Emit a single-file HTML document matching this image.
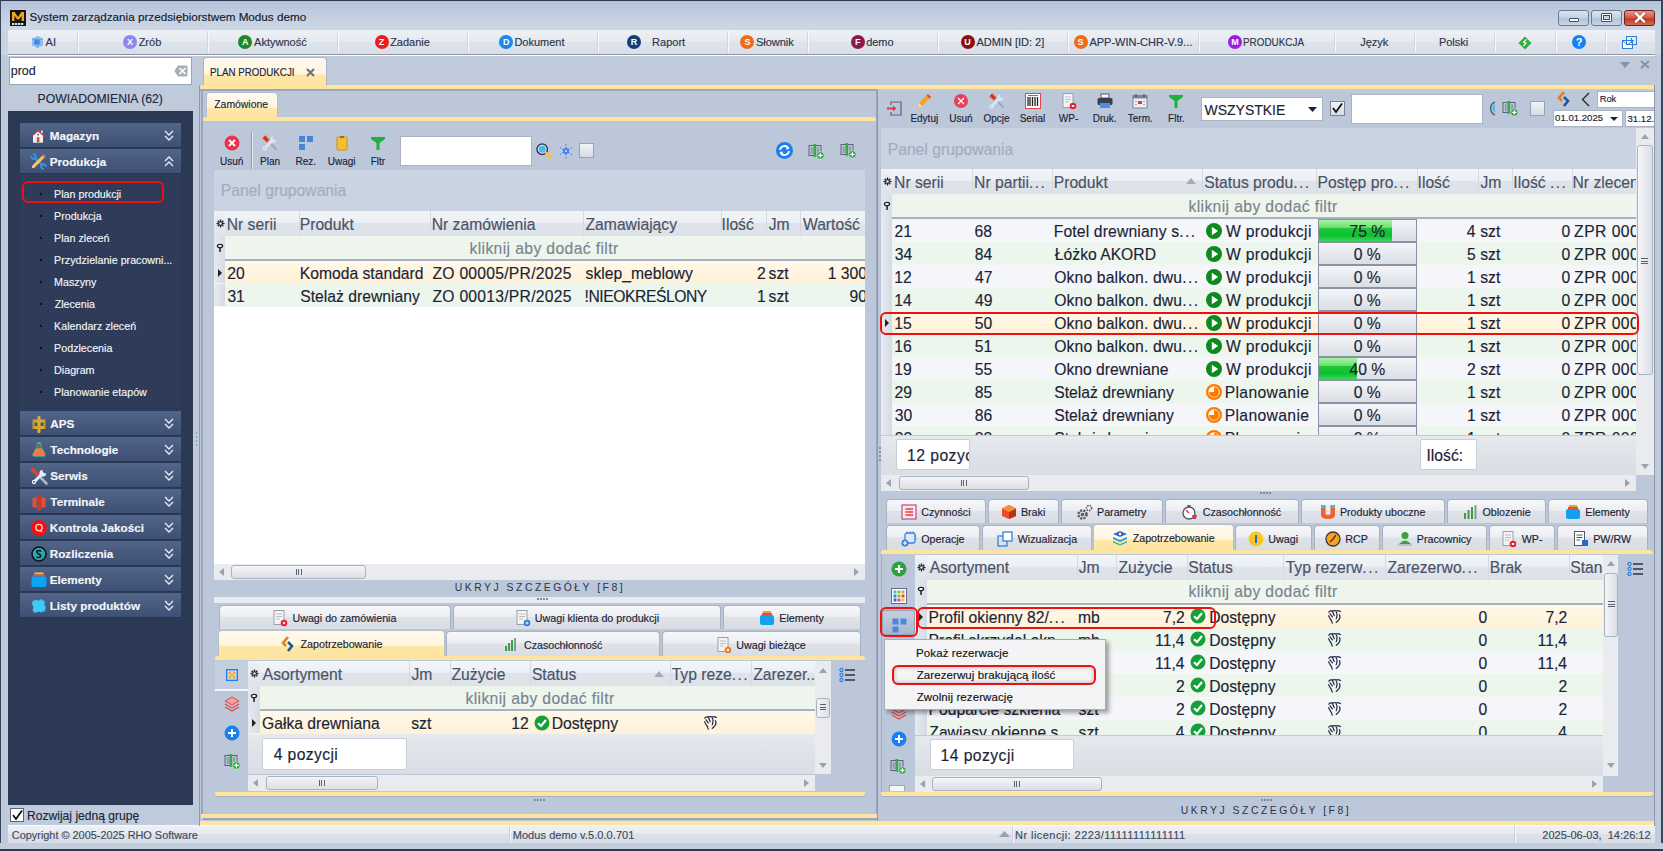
<!DOCTYPE html>
<html><head><meta charset="utf-8">
<style>
*{margin:0;padding:0;box-sizing:border-box}
html,body{width:1663px;height:851px;overflow:hidden}
body{position:relative;background:#bccada;font-family:"Liberation Sans",sans-serif;color:#1b2436}
.a{position:absolute}
.t{position:absolute;white-space:nowrap;line-height:1;-webkit-text-stroke:0.15px currentColor}
svg{overflow:visible}
</style></head><body>
<div class="a" style="left:0px;top:0px;width:1663px;height:851px;background:#bfcbdb"></div>
<div class="a" style="left:0px;top:0px;width:1663px;height:30px;background:linear-gradient(#b4c2d8,#c5d1e2 60%,#ccd7e6)"></div>
<div class="a" style="left:0px;top:30px;width:1663px;height:25px;background:#c9d4e3"></div>
<div class="a" style="left:0px;top:0px;width:1663px;height:1px;background:#2d3a52"></div>
<div class="a" style="left:0px;top:0px;width:1px;height:851px;background:#3a465c"></div>
<div class="a" style="left:1661px;top:0px;width:2px;height:851px;background:#3a465c"></div>
<div class="a" style="left:0px;top:843px;width:1663px;height:6px;background:#c3cddb"></div>
<div class="a" style="left:0px;top:849px;width:1663px;height:2px;background:#2d3a52"></div>
<div class="a" style="left:10px;top:10px;width:16px;height:16px;background:#151515"></div>
<svg class="a" style="left:11px;top:11px;" width="14" height="10" viewBox="0 0 14 10"><path d="M1 10 V1 H3.6 L7 6 L10.4 1 H13 V10 H10.6 V4.8 L7.8 8.6 H6.2 L3.4 4.8 V10Z" fill="#f5a41e"/></svg>
<div class="a" style="left:12px;top:22.5px;width:12px;height:2px;background:repeating-linear-gradient(90deg,#ddd 0 2px,#555 2px 3px)"></div>
<div class="t" style="left:29.47px;top:11.23px;font-size:11.7px;color:#141a28;">System zarządzania przedsiębiorstwem Modus demo</div>
<div class="a" style="left:1558px;top:10px;width:31px;height:16px;background:linear-gradient(#dde6f1,#c3d1e3 50%,#b2c3da 55%,#c9d6e6);border:1px solid #6a7a92;border-radius:3px"></div>
<div class="a" style="left:1591px;top:10px;width:31px;height:16px;background:linear-gradient(#dde6f1,#c3d1e3 50%,#b2c3da 55%,#c9d6e6);border:1px solid #6a7a92;border-radius:3px"></div>
<div class="a" style="left:1624px;top:10px;width:31px;height:16px;background:linear-gradient(#e49a8a,#d0583f 50%,#c03a22 55%,#d36a52);border:1px solid #6b1f1a;border-radius:3px"></div>
<div class="a" style="left:1569px;top:18px;width:10px;height:4px;background:#fff;border:1px solid #3d4d66;border-radius:1px"></div>
<div class="a" style="left:1601px;top:13px;width:11px;height:9px;border:1px solid #3d4d66;background:#fff;border-radius:1px"></div>
<div class="a" style="left:1603px;top:15px;width:7px;height:5px;border:1px solid #3d4d66;background:#c8d5e6"></div>
<svg class="a" style="left:1634px;top:12px;" width="12" height="11" viewBox="0 0 12 11"><path d="M2 1.5 L10 9.5 M10 1.5 L2 9.5" stroke="#3a1010" stroke-width="3.6" stroke-linecap="square" opacity="0.35"/><path d="M2 1.5 L10 9.5 M10 1.5 L2 9.5" stroke="#fff" stroke-width="2.4" stroke-linecap="square"/></svg>
<div class="a" style="left:8px;top:30px;width:1647px;height:24px;background:linear-gradient(#eef1f6,#e4e9f0 50%,#dfe4ec 50%,#d9dfe8)"></div>
<div class="a" style="left:8px;top:54px;width:1647px;height:1px;background:#8f949c"></div>
<div class="a" style="left:8px;top:55px;width:1647px;height:1px;background:#fbfcfd"></div>
<div class="a" style="left:77px;top:31px;width:1px;height:22px;background:#d2d8e1"></div>
<div class="a" style="left:78px;top:31px;width:1px;height:22px;background:#f6f8fb"></div>
<div class="a" style="left:207px;top:31px;width:1px;height:22px;background:#d2d8e1"></div>
<div class="a" style="left:208px;top:31px;width:1px;height:22px;background:#f6f8fb"></div>
<div class="a" style="left:337px;top:31px;width:1px;height:22px;background:#d2d8e1"></div>
<div class="a" style="left:338px;top:31px;width:1px;height:22px;background:#f6f8fb"></div>
<div class="a" style="left:467px;top:31px;width:1px;height:22px;background:#d2d8e1"></div>
<div class="a" style="left:468px;top:31px;width:1px;height:22px;background:#f6f8fb"></div>
<div class="a" style="left:597px;top:31px;width:1px;height:22px;background:#d2d8e1"></div>
<div class="a" style="left:598px;top:31px;width:1px;height:22px;background:#f6f8fb"></div>
<div class="a" style="left:727px;top:31px;width:1px;height:22px;background:#d2d8e1"></div>
<div class="a" style="left:728px;top:31px;width:1px;height:22px;background:#f6f8fb"></div>
<div class="a" style="left:807px;top:31px;width:1px;height:22px;background:#d2d8e1"></div>
<div class="a" style="left:808px;top:31px;width:1px;height:22px;background:#f6f8fb"></div>
<div class="a" style="left:937px;top:31px;width:1px;height:22px;background:#d2d8e1"></div>
<div class="a" style="left:938px;top:31px;width:1px;height:22px;background:#f6f8fb"></div>
<div class="a" style="left:1067px;top:31px;width:1px;height:22px;background:#d2d8e1"></div>
<div class="a" style="left:1068px;top:31px;width:1px;height:22px;background:#f6f8fb"></div>
<div class="a" style="left:1198px;top:31px;width:1px;height:22px;background:#d2d8e1"></div>
<div class="a" style="left:1199px;top:31px;width:1px;height:22px;background:#f6f8fb"></div>
<div class="a" style="left:1334px;top:31px;width:1px;height:22px;background:#d2d8e1"></div>
<div class="a" style="left:1335px;top:31px;width:1px;height:22px;background:#f6f8fb"></div>
<div class="a" style="left:1414px;top:31px;width:1px;height:22px;background:#d2d8e1"></div>
<div class="a" style="left:1415px;top:31px;width:1px;height:22px;background:#f6f8fb"></div>
<div class="a" style="left:1494px;top:31px;width:1px;height:22px;background:#d2d8e1"></div>
<div class="a" style="left:1495px;top:31px;width:1px;height:22px;background:#f6f8fb"></div>
<div class="a" style="left:1555px;top:31px;width:1px;height:22px;background:#d2d8e1"></div>
<div class="a" style="left:1556px;top:31px;width:1px;height:22px;background:#f6f8fb"></div>
<div class="a" style="left:1605px;top:31px;width:1px;height:22px;background:#d2d8e1"></div>
<div class="a" style="left:1606px;top:31px;width:1px;height:22px;background:#f6f8fb"></div>
<svg class="a" style="left:29.746874999999996px;top:35px;" width="14" height="14" viewBox="0 0 14 14"><path d="M2 3.5 L7.5 1 L13 3.5 L13 10.5 L7.5 13 L2 10.5Z" fill="#8cbcf2"/><path d="M4.5 4.5 L9.5 4.5 L9.5 9.5 L4.5 9.5Z" fill="#2d7fe0"/><path d="M2 3.5 L7.5 6 L13 3.5 M7.5 6 V13" stroke="#5a9ae8" stroke-width="0.8" fill="none"/></svg>
<div class="t" style="left:45.58px;top:36.85px;font-size:11px;color:#2c3549;">AI</div>
<div class="a" style="left:123.13750000000002px;top:35px;width:14px;height:14px;border-radius:7px;background:#8c86f0;color:#fff;font-size:9px;font-weight:bold;line-height:14px;text-align:center;font-family:Liberation Sans">X</div>
<div class="t" style="left:138.65px;top:36.85px;font-size:11px;color:#2c3549;">Zrób</div>
<div class="a" style="left:238.15312500000002px;top:35px;width:14px;height:14px;border-radius:7px;background:#1a8a2a;color:#fff;font-size:9px;font-weight:bold;line-height:14px;text-align:center;font-family:Liberation Sans">A</div>
<div class="t" style="left:254.08px;top:36.85px;font-size:11px;color:#2c3549;">Aktywność</div>
<div class="a" style="left:374.559375px;top:35px;width:14px;height:14px;border-radius:7px;background:#e81e1e;color:#fff;font-size:9px;font-weight:bold;line-height:14px;text-align:center;font-family:Liberation Sans">Z</div>
<div class="t" style="left:390.15px;top:36.85px;font-size:11px;color:#2c3549;">Zadanie</div>
<div class="a" style="left:499.371875px;top:35px;width:14px;height:14px;border-radius:7px;background:#1e88e8;color:#fff;font-size:9px;font-weight:bold;line-height:14px;text-align:center;font-family:Liberation Sans">D</div>
<div class="t" style="left:514.4px;top:36.85px;font-size:11px;color:#2c3549;">Dokument</div>
<div class="a" style="left:627px;top:35px;width:14px;height:14px;border-radius:7px;background:#123f7a;color:#fff;font-size:9px;font-weight:bold;line-height:14px;text-align:center;font-family:Liberation Sans">R</div>
<div class="t" style="left:652.1px;top:36.85px;font-size:11px;color:#2c3549;">Raport</div>
<div class="a" style="left:740.4968749999999px;top:35px;width:14px;height:14px;border-radius:7px;background:#f06a1a;color:#fff;font-size:9px;font-weight:bold;line-height:14px;text-align:center;font-family:Liberation Sans">S</div>
<div class="t" style="left:755.9px;top:36.85px;font-size:11px;color:#2c3549;">Słownik</div>
<div class="a" style="left:850.6843749999999px;top:35px;width:14px;height:14px;border-radius:7px;background:#8a1a4a;color:#fff;font-size:9px;font-weight:bold;line-height:14px;text-align:center;font-family:Liberation Sans">F</div>
<div class="t" style="left:866.14px;top:36.85px;font-size:11px;color:#2c3549;">demo</div>
<div class="a" style="left:960.5124999999999px;top:35px;width:14px;height:14px;border-radius:7px;background:#8a1010;color:#fff;font-size:9px;font-weight:bold;line-height:14px;text-align:center;font-family:Liberation Sans">U</div>
<div class="t" style="left:976.38px;top:36.85px;font-size:11px;color:#2c3549;">ADMIN [ID: 2]</div>
<div class="a" style="left:1073.5046875px;top:35px;width:14px;height:14px;border-radius:7px;background:#f06a1a;color:#fff;font-size:9px;font-weight:bold;line-height:14px;text-align:center;font-family:Liberation Sans">S</div>
<div class="t" style="left:1089.38px;top:36.85px;font-size:11px;color:#2c3549;">APP-WIN-CHR-V.9...</div>
<div class="a" style="left:1227.9203125px;top:35px;width:14px;height:14px;border-radius:7px;background:#9a20e0;color:#fff;font-size:9px;font-weight:bold;line-height:14px;text-align:center;font-family:Liberation Sans">M</div>
<div class="t" style="left:1242.9px;top:36.85px;font-size:11px;color:#2c3549;transform:scaleX(0.9);transform-origin:left">PRODUKCJA</div>
<div class="t" style="left:1360.23px;top:36.85px;font-size:11px;color:#2c3549;">Język</div>
<div class="t" style="left:1438.9px;top:36.85px;font-size:11px;color:#2c3549;">Polski</div>
<svg class="a" style="left:1518px;top:36px;" width="14" height="14" viewBox="0 0 14 14"><path d="M7 0.5 L13.5 7 L7 13.5 L0.5 7Z" fill="#2fae3c"/><path d="M8.5 3.5 L5.5 6 L8 7 L5.5 10" stroke="#fff" stroke-width="1.2" fill="none"/></svg>
<div class="a" style="left:1572px;top:35px;width:14px;height:14px;border-radius:7px;background:#1a7ff0;color:#fff;font-size:11px;font-weight:bold;line-height:14px;text-align:center">?</div>
<svg class="a" style="left:1622px;top:36px;" width="15" height="13" viewBox="0 0 15 13"><rect x="0.5" y="4.5" width="10" height="8" fill="#fff" stroke="#2f7fd8"/><path d="M0.5 4.5 L5.5 9 L10.5 4.5" stroke="#2f7fd8" fill="none"/><rect x="4.5" y="0.5" width="10" height="8" fill="none" stroke="#2f7fd8"/><path d="M9.5 2 V7 M7 4.5 H12" stroke="#2f7fd8"/></svg>
<div class="a" style="left:9px;top:57px;width:183px;height:28px;background:#fff;border:1px solid #97a5b9"></div>
<div class="t" style="left:10.69px;top:64.67px;font-size:12.5px;color:#1b2436;">prod</div>
<svg class="a" style="left:174px;top:65px;" width="14" height="12" viewBox="0 0 14 12"><path d="M4 0.5 H12.5 Q13.5 0.5 13.5 1.5 V10.5 Q13.5 11.5 12.5 11.5 H4 L0.3 6Z" fill="#a9aeb6"/></svg>
<svg class="a" style="left:178px;top:67px;" width="9" height="8" viewBox="0 0 9 8"><path d="M1.5 1 L7.5 7 M7.5 1 L1.5 7" stroke="#fff" stroke-width="1.6"/></svg>
<div class="t" style="left:-299.8px;width:800px;text-align:center;top:93.01px;font-size:12.2px;color:#1f2840;">POWIADOMIENIA (62)</div>
<div class="a" style="left:8px;top:111px;width:185px;height:694px;background:#2c3954"></div>
<svg class="a" style="left:20px;top:174px;" width="161" height="237" viewBox="0 0 161 237"><defs><pattern id="dots" width="4" height="4" patternUnits="userSpaceOnUse"><rect width="4" height="4" fill="#2c3a57"/><rect x="1" y="1" width="1" height="1" fill="#3a4a6a"/><rect x="3" y="3" width="1" height="1" fill="#3a4a6a"/></pattern></defs><rect width="161" height="237" fill="url(#dots)"/></svg>
<div class="a" style="left:20px;top:123px;width:161px;height:25px;background:linear-gradient(#52658a,#475a7e 50%,#3e5074 100%);border-bottom:1px solid #2a3650"></div>
<div class="t" style="left:49.72px;top:129.74px;font-size:11.7px;color:#f4f6fa;font-weight:bold;">Magazyn</div>
<svg class="a" style="left:164px;top:130px;" width="10" height="11" viewBox="0 0 10 11"><path d="M1 1 L5 5 L9 1 M1 6 L5 10 L9 6" stroke="#e8edf5" stroke-width="1.3" fill="none"/></svg>
<svg class="a" style="left:31px;top:129px;" width="15" height="15" viewBox="0 0 15 15"><rect x="10" y="1.5" width="1.6" height="3" fill="#e8ecf4"/><path d="M7 1.5 L13 7 L12 7 L12 13.5 L2 13.5 L2 7 L1 7Z" fill="#eef1f8"/><path d="M7 0.8 L14 7.2 L12.8 7.6 L7 2.4 L1.2 7.6 L0 7.2Z" fill="#d0302a"/><rect x="5.8" y="8.2" width="2.6" height="5.3" fill="#e04a1a"/><circle cx="7.1" cy="5.6" r="0.9" fill="#1a60b0"/><rect x="2" y="13" width="10" height="0.8" fill="#b8c0d0"/></svg>
<div class="a" style="left:20px;top:149px;width:161px;height:25px;background:linear-gradient(#52658a,#475a7e 50%,#3e5074 100%);border-bottom:1px solid #2a3650"></div>
<div class="t" style="left:49.72px;top:155.74px;font-size:11.7px;color:#f4f6fa;font-weight:bold;">Produkcja</div>
<svg class="a" style="left:164px;top:156px;" width="10" height="11" viewBox="0 0 10 11"><path d="M1 5 L5 1 L9 5 M1 10 L5 6 L9 10" stroke="#e8edf5" stroke-width="1.3" fill="none"/></svg>
<svg class="a" style="left:30px;top:153px;" width="17" height="17" viewBox="0 0 17 17"><path d="M3.5 4.2 L13 12.8" stroke="#3a8ee8" stroke-width="2.2"/><path d="M1 3 A3 3 0 0 0 5.5 5.5 M3 1 A3 3 0 0 1 5.5 5.5" stroke="#3a8ee8" stroke-width="2" fill="none"/><path d="M16 14 A3 3 0 0 0 11.5 11.5 M14 16 A3 3 0 0 1 11.5 11.5" stroke="#3a8ee8" stroke-width="2" fill="none"/><path d="M2 15 L2.8 12 L12 2.8 L14.2 5 L5 14.2Z" fill="#f6c84a"/><path d="M12 2.8 L13.3 1.5 L15.5 3.7 L14.2 5Z" fill="#f08a70"/><path d="M2 15 L2.8 12 L5 14.2Z" fill="#f8d8c0"/></svg>
<div class="a" style="left:40px;top:193px;width:2px;height:2px;background:#0c1220"></div>
<div class="t" style="left:54.12px;top:189.19px;font-size:10.7px;color:#f2f4f8;">Plan produkcji</div>
<div class="a" style="left:40px;top:215px;width:2px;height:2px;background:#0c1220"></div>
<div class="t" style="left:54.12px;top:211.19px;font-size:10.7px;color:#f2f4f8;">Produkcja</div>
<div class="a" style="left:40px;top:237px;width:2px;height:2px;background:#0c1220"></div>
<div class="t" style="left:54.12px;top:233.19px;font-size:10.7px;color:#f2f4f8;">Plan zleceń</div>
<div class="a" style="left:40px;top:259px;width:2px;height:2px;background:#0c1220"></div>
<div class="t" style="left:54.12px;top:255.19px;font-size:10.7px;color:#f2f4f8;">Przydzielanie pracowni...</div>
<div class="a" style="left:40px;top:281px;width:2px;height:2px;background:#0c1220"></div>
<div class="t" style="left:54.12px;top:277.19px;font-size:10.7px;color:#f2f4f8;">Maszyny</div>
<div class="a" style="left:40px;top:303px;width:2px;height:2px;background:#0c1220"></div>
<div class="t" style="left:54.66px;top:299.19px;font-size:10.7px;color:#f2f4f8;">Zlecenia</div>
<div class="a" style="left:40px;top:325px;width:2px;height:2px;background:#0c1220"></div>
<div class="t" style="left:54.12px;top:321.19px;font-size:10.7px;color:#f2f4f8;">Kalendarz zleceń</div>
<div class="a" style="left:40px;top:347px;width:2px;height:2px;background:#0c1220"></div>
<div class="t" style="left:54.12px;top:343.19px;font-size:10.7px;color:#f2f4f8;">Podzlecenia</div>
<div class="a" style="left:40px;top:369px;width:2px;height:2px;background:#0c1220"></div>
<div class="t" style="left:54.12px;top:365.19px;font-size:10.7px;color:#f2f4f8;">Diagram</div>
<div class="a" style="left:40px;top:391px;width:2px;height:2px;background:#0c1220"></div>
<div class="t" style="left:54.12px;top:387.19px;font-size:10.7px;color:#f2f4f8;">Planowanie etapów</div>
<div class="a" style="left:20px;top:411px;width:161px;height:25px;background:linear-gradient(#52658a,#475a7e 50%,#3e5074 100%);border-bottom:1px solid #2a3650"></div>
<div class="t" style="left:50.21px;top:417.74px;font-size:11.7px;color:#f4f6fa;font-weight:bold;">APS</div>
<svg class="a" style="left:164px;top:418px;" width="10" height="11" viewBox="0 0 10 11"><path d="M1 1 L5 5 L9 1 M1 6 L5 10 L9 6" stroke="#e8edf5" stroke-width="1.3" fill="none"/></svg>
<svg class="a" style="left:32px;top:415.5px;" width="14" height="17" viewBox="0 0 14 17"><rect x="5.5" y="0" width="3" height="17" rx="1" fill="#e0b030"/><rect x="1" y="3.5" width="12" height="3" rx="1" fill="#d8a830"/><rect x="1" y="10" width="12" height="3" rx="1" fill="#d8a830"/><rect x="0.5" y="3.5" width="2" height="9.5" fill="#c89828"/><rect x="11.5" y="3.5" width="2" height="9.5" fill="#c89828"/></svg>
<div class="a" style="left:20px;top:437px;width:161px;height:25px;background:linear-gradient(#52658a,#475a7e 50%,#3e5074 100%);border-bottom:1px solid #2a3650"></div>
<div class="t" style="left:50.37px;top:443.74px;font-size:11.7px;color:#f4f6fa;font-weight:bold;">Technologie</div>
<svg class="a" style="left:164px;top:444px;" width="10" height="11" viewBox="0 0 10 11"><path d="M1 1 L5 5 L9 1 M1 6 L5 10 L9 6" stroke="#e8edf5" stroke-width="1.3" fill="none"/></svg>
<svg class="a" style="left:32px;top:442px;" width="14" height="15" viewBox="0 0 14 15"><path d="M5.3 2 H8.7 V5 L12.8 12.3 Q13.3 14 11.5 14 H2.5 Q0.7 14 1.2 12.3 L5.3 5Z" fill="#f07a40" stroke="#5ac8b0" stroke-width="1.1"/><path d="M2.2 8.5 H11.8 L12.8 12.3 Q13.3 14 11.5 14 H2.5 Q0.7 14 1.2 12.3Z" fill="#f07a40"/><path d="M3.5 6.2 H10.5 L8.7 5 V2 H5.3 V5Z" fill="#3a4a6a" opacity="0.6"/><rect x="5.5" y="0" width="3" height="2" fill="#40c080"/></svg>
<div class="a" style="left:20px;top:463px;width:161px;height:25px;background:linear-gradient(#52658a,#475a7e 50%,#3e5074 100%);border-bottom:1px solid #2a3650"></div>
<div class="t" style="left:50.16px;top:469.74px;font-size:11.7px;color:#f4f6fa;font-weight:bold;">Serwis</div>
<svg class="a" style="left:164px;top:470px;" width="10" height="11" viewBox="0 0 10 11"><path d="M1 1 L5 5 L9 1 M1 6 L5 10 L9 6" stroke="#e8edf5" stroke-width="1.3" fill="none"/></svg>
<svg class="a" style="left:30.5px;top:467.5px;" width="17" height="17" viewBox="0 0 17 17"><path d="M9.5 9.5 L15.5 15.5" stroke="#a8b8d0" stroke-width="2.6" stroke-linecap="round"/><path d="M1.5 1.5 L6.5 6.5" stroke="#e8402a" stroke-width="3.5" stroke-linecap="round"/><path d="M3 14 L11.5 5.5" stroke="#e8eef8" stroke-width="3" stroke-linecap="round"/><path d="M12 2 A3.3 3.3 0 1 0 15 5 L13 5.6 L11.4 4Z" fill="#e8eef8"/><circle cx="3" cy="14" r="2.2" fill="#e8eef8"/><circle cx="3" cy="14" r="0.9" fill="#475a7e"/></svg>
<div class="a" style="left:20px;top:489px;width:161px;height:25px;background:linear-gradient(#52658a,#475a7e 50%,#3e5074 100%);border-bottom:1px solid #2a3650"></div>
<div class="t" style="left:50.37px;top:495.74px;font-size:11.7px;color:#f4f6fa;font-weight:bold;">Terminale</div>
<svg class="a" style="left:164px;top:496px;" width="10" height="11" viewBox="0 0 10 11"><path d="M1 1 L5 5 L9 1 M1 6 L5 10 L9 6" stroke="#e8edf5" stroke-width="1.3" fill="none"/></svg>
<svg class="a" style="left:32px;top:493.5px;" width="14" height="17" viewBox="0 0 14 17"><path d="M0.5 4 L4.5 3 L4.5 14 L0.5 13Z" fill="#e0503a"/><path d="M5 1.5 L7 0 L9 1.5 L9 15.5 L7 17 L5 15.5Z" fill="#c83a28"/><path d="M9.5 3 L13.5 4 L13.5 13 L9.5 14Z" fill="#e0503a"/></svg>
<div class="a" style="left:20px;top:515px;width:161px;height:25px;background:linear-gradient(#52658a,#475a7e 50%,#3e5074 100%);border-bottom:1px solid #2a3650"></div>
<div class="t" style="left:49.72px;top:521.74px;font-size:11.7px;color:#f4f6fa;font-weight:bold;">Kontrola Jakości</div>
<svg class="a" style="left:164px;top:522px;" width="10" height="11" viewBox="0 0 10 11"><path d="M1 1 L5 5 L9 1 M1 6 L5 10 L9 6" stroke="#e8edf5" stroke-width="1.3" fill="none"/></svg>
<svg class="a" style="left:30.5px;top:519.5px;" width="16" height="16" viewBox="0 0 16 16"><circle cx="8" cy="8" r="7.8" fill="#ff0a0a"/><circle cx="8" cy="7.6" r="3.2" fill="none" stroke="#ffd0d0" stroke-width="1.4"/><path d="M9 10 L11 12" stroke="#ffd0d0" stroke-width="1.4"/></svg>
<div class="a" style="left:20px;top:541px;width:161px;height:25px;background:linear-gradient(#52658a,#475a7e 50%,#3e5074 100%);border-bottom:1px solid #2a3650"></div>
<div class="t" style="left:49.72px;top:547.74px;font-size:11.7px;color:#f4f6fa;font-weight:bold;">Rozliczenia</div>
<svg class="a" style="left:164px;top:548px;" width="10" height="11" viewBox="0 0 10 11"><path d="M1 1 L5 5 L9 1 M1 6 L5 10 L9 6" stroke="#e8edf5" stroke-width="1.3" fill="none"/></svg>
<svg class="a" style="left:30.5px;top:545.5px;" width="16" height="16" viewBox="0 0 16 16"><circle cx="8" cy="8" r="7" fill="#28a8b0" stroke="#101418" stroke-width="1.6"/><path d="M10.2 5.3 Q8 3.8 6 5 Q5 6.5 7.5 7.8 Q10.3 9 9.6 10.7 Q8 12.2 5.6 10.8" stroke="#101418" stroke-width="1.5" fill="none"/></svg>
<div class="a" style="left:20px;top:567px;width:161px;height:25px;background:linear-gradient(#52658a,#475a7e 50%,#3e5074 100%);border-bottom:1px solid #2a3650"></div>
<div class="t" style="left:49.72px;top:573.74px;font-size:11.7px;color:#f4f6fa;font-weight:bold;">Elementy</div>
<svg class="a" style="left:164px;top:574px;" width="10" height="11" viewBox="0 0 10 11"><path d="M1 1 L5 5 L9 1 M1 6 L5 10 L9 6" stroke="#e8edf5" stroke-width="1.3" fill="none"/></svg>
<svg class="a" style="left:31px;top:572px;" width="16" height="15" viewBox="0 0 16 15"><rect x="3.5" y="0.5" width="9" height="2" fill="#f8c020"/><rect x="2" y="2.5" width="12" height="2" fill="#f0502a"/><rect x="0.5" y="4.5" width="15" height="10.5" rx="2" fill="#0aa4f8"/></svg>
<div class="a" style="left:20px;top:593px;width:161px;height:25px;background:linear-gradient(#52658a,#475a7e 50%,#3e5074 100%);border-bottom:1px solid #2a3650"></div>
<div class="t" style="left:49.72px;top:599.74px;font-size:11.7px;color:#f4f6fa;font-weight:bold;">Listy produktów</div>
<svg class="a" style="left:164px;top:600px;" width="10" height="11" viewBox="0 0 10 11"><path d="M1 1 L5 5 L9 1 M1 6 L5 10 L9 6" stroke="#e8edf5" stroke-width="1.3" fill="none"/></svg>
<svg class="a" style="left:31px;top:598px;" width="16" height="16" viewBox="0 0 16 16"><path d="M1.5 3 L6 1.5 L7 3 L10 1 L14 3.5 L13.5 7 L15 9 L14 13 L10 14.5 L8 13.5 L4 15 L1.5 12.5 L2.5 9 L1 6Z" fill="#3ec8f4"/><path d="M10 1 L14 3.5 L13.5 7 L15 9 L14 13 L10 14.5" fill="none" stroke="#1a98d8" stroke-width="1"/></svg>
<div class="a" style="left:21.7px;top:181px;width:142.5px;height:22px;border:2px solid #ee1111;border-radius:6px"></div>
<div class="a" style="left:10px;top:808px;width:14px;height:14px;background:#fff;border:1px solid #5a6478"></div>
<svg class="a" style="left:12px;top:810px;" width="11" height="10" viewBox="0 0 11 10"><path d="M1 5 L4 9 L10 0.5" stroke="#111" stroke-width="1.8" fill="none"/></svg>
<div class="t" style="left:27.01px;top:810.05px;font-size:12.1px;color:#1b2436;">Rozwijaj jedną grupę</div>
<div class="a" style="left:193px;top:56px;width:7px;height:770px;background:#bfcbdb"></div>
<div class="a" style="left:196px;top:432px;width:1px;height:2px;background:#8592a8"></div>
<div class="a" style="left:196px;top:436px;width:1px;height:2px;background:#8592a8"></div>
<div class="a" style="left:196px;top:440px;width:1px;height:2px;background:#8592a8"></div>
<div class="a" style="left:196px;top:444px;width:1px;height:2px;background:#8592a8"></div>
<div class="a" style="left:8px;top:825px;width:1647px;height:18px;background:linear-gradient(#eef1f5,#e6eaf0 50%,#dde2ea 50%,#d7dde6)"></div>
<div class="a" style="left:8px;top:825px;width:1647px;height:1px;background:#f8f9fb"></div>
<div class="a" style="left:509px;top:826px;width:1px;height:17px;background:#c9d0da"></div>
<div class="a" style="left:510px;top:826px;width:1px;height:17px;background:#f6f8fa"></div>
<div class="a" style="left:1012px;top:826px;width:1px;height:17px;background:#c9d0da"></div>
<div class="a" style="left:1013px;top:826px;width:1px;height:17px;background:#f6f8fa"></div>
<div class="a" style="left:1514px;top:826px;width:1px;height:17px;background:#c9d0da"></div>
<div class="a" style="left:1515px;top:826px;width:1px;height:17px;background:#f6f8fa"></div>
<div class="t" style="left:11.85px;top:830.1px;font-size:10.9px;color:#404a5c;">Copyright © 2005-2025 RHO Software</div>
<div class="t" style="left:512.7px;top:830.05px;font-size:11px;color:#404a5c;letter-spacing:0.07px">Modus demo v.5.0.0.701</div>
<svg class="a" style="left:999px;top:831px;" width="11" height="6" viewBox="0 0 11 6"><path d="M0 6 L5.5 0 L11 6Z" fill="#98a2b2"/></svg>
<div class="t" style="left:1015.1px;top:830.05px;font-size:11px;color:#404a5c;letter-spacing:0.44px">Nr licencji: 2223/11111111111111</div>
<div class="t" style="right:12.450000000000045px;top:830.05px;font-size:11px;color:#404a5c;">2025-06-03,&nbsp; 14:26:12</div>
<div class="a" style="left:203px;top:57px;width:124px;height:29px;background:linear-gradient(#fffaf0,#fff4de 57%,#fde7a8 62%,#fde5a0);border:1px solid #a9b4c4;border-bottom:none;border-radius:4px 4px 0 0"></div>
<div class="t" style="left:210.13px;top:67.23px;font-size:10.6px;color:#1b2436;transform:scaleX(0.92);transform-origin:left">PLAN PRODUKCJI</div>
<svg class="a" style="left:306px;top:68px;" width="9" height="9" viewBox="0 0 9 9"><path d="M1 1 L8 8 M8 1 L1 8" stroke="#6a7484" stroke-width="2.2"/></svg>
<svg class="a" style="left:1620px;top:62px;" width="10" height="6" viewBox="0 0 10 6"><path d="M0 0 L10 0 L5 6Z" fill="#8393ab"/></svg>
<svg class="a" style="left:1640px;top:60px;" width="10" height="9" viewBox="0 0 10 9"><path d="M1 1 L9 8 M9 1 L1 8" stroke="#8393ab" stroke-width="2"/></svg>
<div class="a" style="left:200px;top:85px;width:1455px;height:4px;background:#fde5a0;border-radius:3px 3px 0 0"></div>
<div class="a" style="left:200px;top:89px;width:678px;height:2px;background:#9aa7bb"></div>
<div class="a" style="left:199px;top:85px;width:1px;height:741px;background:#8d99ad"></div>
<div class="a" style="left:1654px;top:85px;width:1px;height:741px;background:#8d99ad"></div>
<div class="a" style="left:200px;top:91px;width:1454px;height:730px;background:#bcc8da"></div>
<div class="a" style="left:200px;top:821px;width:1455px;height:4px;background:#fde5a0"></div>
<div class="a" style="left:201px;top:91px;width:676px;height:727px;background:#bcc8da;border-left:2px solid #9aa6ba"></div>
<div class="a" style="left:876px;top:91px;width:2px;height:727px;background:#9aa6ba"></div>
<div class="a" style="left:206px;top:92px;width:72px;height:26px;background:linear-gradient(#fffaf0,#fff4de 57%,#fde7a8 62%,#fde5a0);border:1px solid #b4bdcb;border-bottom:none;border-radius:4px 4px 0 0"></div>
<div class="t" style="left:214.27px;top:100.32px;font-size:10.4px;color:#1b2436;">Zamówione</div>
<div class="a" style="left:203px;top:117px;width:673px;height:4px;background:#fde5a0;border-radius:3px 3px 0 0"></div>
<div class="a" style="left:203px;top:121px;width:673px;height:693px;background:#bcc8da"></div>
<div class="a" style="left:201px;top:814px;width:676px;height:4px;background:#fde5a0"></div>
<svg class="a" style="left:223.7px;top:135px;" width="16" height="16" viewBox="0 0 16 16"><circle cx="8" cy="8" r="7.5" fill="#e8334a"/><path d="M5 5 L11 11 M11 5 L5 11" stroke="#fff" stroke-width="1.8"/></svg>
<div class="t" style="left:-168.3px;width:800px;text-align:center;top:156.7px;font-size:10px;color:#1b2436;">Usuń</div>
<div class="a" style="left:251px;top:132px;width:1px;height:37px;background:#8d99ad"></div>
<div class="a" style="left:252px;top:132px;width:1px;height:37px;background:#e6ebf2"></div>
<svg class="a" style="left:262px;top:135px;" width="16" height="16" viewBox="0 0 16 16"><path d="M8.5 8.5 L14 14" stroke="#9aaac4" stroke-width="2.4" stroke-linecap="round"/><path d="M0.3 3.2 L3.2 0.3 L7.6 4.7 L4.7 7.6Z" fill="#f0401a"/><path d="M2.2 2.2 L5.6 5.6" stroke="#902010" stroke-width="0.8"/><path d="M2.5 13.5 L10.5 5.5" stroke="#dde6f4" stroke-width="2.8" stroke-linecap="round"/><path d="M11 1.2 A3.2 3.2 0 1 0 14.8 5 L12.8 5.4 L10.6 3.2Z" fill="#dde6f4"/><circle cx="2.6" cy="13.4" r="2.2" fill="#dde6f4"/><circle cx="2.6" cy="13.4" r="0.8" fill="#bcc8da"/></svg>
<div class="t" style="left:-130px;width:800px;text-align:center;top:156.7px;font-size:10px;color:#1b2436;">Plan</div>
<svg class="a" style="left:297.8px;top:135px;" width="16" height="16" viewBox="0 0 16 16"><rect x="1" y="1" width="6" height="6" fill="#4a84d8"/><rect x="9" y="1" width="6" height="6" fill="#4a84d8"/><rect x="1" y="9" width="6" height="6" fill="#4a84d8"/></svg>
<div class="t" style="left:-94.19999999999999px;width:800px;text-align:center;top:156.7px;font-size:10px;color:#1b2436;">Rez.</div>
<svg class="a" style="left:333.7px;top:135px;" width="16" height="16" viewBox="0 0 16 16"><rect x="3" y="2" width="10" height="13" rx="1" fill="#f4c030" stroke="#c89020"/><rect x="6" y="1" width="4" height="2" fill="#8a7040"/></svg>
<div class="t" style="left:-58.30000000000001px;width:800px;text-align:center;top:156.7px;font-size:10px;color:#1b2436;">Uwagi</div>
<svg class="a" style="left:370px;top:135px;" width="16" height="16" viewBox="0 0 16 16"><path d="M1 2 L15 2 L15 4 L9.5 8 L9.5 15 L6.5 15 L6.5 8 L1 4Z" fill="#1fb040"/></svg>
<div class="t" style="left:-22px;width:800px;text-align:center;top:156.7px;font-size:10px;color:#1b2436;">Fltr</div>
<div class="a" style="left:400px;top:136px;width:132px;height:30px;background:#fff;border:1px solid #a8b2c2"></div>
<svg class="a" style="left:536px;top:143px;" width="16" height="16" viewBox="0 0 16 16"><circle cx="6.2" cy="6.2" r="5.2" fill="#fff" stroke="#2f3d4c" stroke-width="1.5"/><circle cx="6.2" cy="6.2" r="3.6" fill="#4ab8ec"/><path d="M10.2 10.2 L14.5 14.5" stroke="#f8c040" stroke-width="2.6" stroke-linecap="round"/></svg>
<svg class="a" style="left:559px;top:144px;" width="14" height="14" viewBox="0 0 14 14"><polygon points="7.00,2.40 10.98,9.30 3.02,9.30" fill="#3a82f0"/><polygon points="10.98,4.70 7.00,11.60 3.02,4.70" fill="#3a82f0"/><circle cx="7" cy="7" r="2.6" fill="#3a82f0"/><circle cx="7" cy="7" r="1.1" fill="#d8dee8"/><rect x="6.30" y="-0.10" width="1.4" height="1.4" fill="#5a92f0"/><rect x="11.84" y="3.10" width="1.4" height="1.4" fill="#5a92f0"/><rect x="11.84" y="9.50" width="1.4" height="1.4" fill="#5a92f0"/><rect x="6.30" y="12.70" width="1.4" height="1.4" fill="#5a92f0"/><rect x="0.76" y="9.50" width="1.4" height="1.4" fill="#5a92f0"/><rect x="0.76" y="3.10" width="1.4" height="1.4" fill="#5a92f0"/></svg>
<div class="a" style="left:579px;top:143px;width:15px;height:15px;background:linear-gradient(#f2f4f7,#d6dbe3);border:1px solid #98a2b2"></div>
<svg class="a" style="left:776px;top:142px;" width="17" height="17" viewBox="0 0 17 17"><circle cx="8.5" cy="8.5" r="8.5" fill="#1a7ff0"/><path d="M4 8 A4.5 4.5 0 0 1 12.5 6.5 M13 9 A4.5 4.5 0 0 1 4.5 10.5" stroke="#fff" stroke-width="1.8" fill="none"/><path d="M11 4 L13.5 7 L10 7.5Z M6 13 L3.5 10 L7 9.5Z" fill="#fff"/></svg>
<svg class="a" style="left:808px;top:143px;" width="18" height="17" viewBox="0 0 18 17"><rect x="1" y="2.5" width="12" height="10" fill="none" stroke="#5a6478" stroke-width="1"/><rect x="2.8" y="4.2" width="1.8" height="6.8" fill="#8d98aa"/><rect x="9.2" y="4.2" width="1.8" height="6.8" fill="#8d98aa"/><rect x="5.4" y="1" width="2.8" height="12.8" fill="#3aaa48"/><circle cx="12.4" cy="12.4" r="3.7" fill="#2ca443" stroke="#e8f4ea" stroke-width="0.5"/><path d="M12.4 10.2 V14.6 M10.2 12.4 H14.6" stroke="#fff" stroke-width="1.3"/></svg>
<svg class="a" style="left:840px;top:142.2px;" width="18" height="17" viewBox="0 0 18 17"><rect x="1" y="2.5" width="12" height="10" fill="none" stroke="#5a6478" stroke-width="1"/><rect x="2.8" y="4.2" width="1.8" height="6.8" fill="#8d98aa"/><rect x="9.2" y="4.2" width="1.8" height="6.8" fill="#8d98aa"/><rect x="5.4" y="1" width="2.8" height="12.8" fill="#3aaa48"/><circle cx="12.4" cy="12.4" r="3.7" fill="#2ca443" stroke="#e8f4ea" stroke-width="0.5"/><path d="M12.4 10.2 V14.6 M10.2 12.4 H14.6" stroke="#fff" stroke-width="1.3"/></svg>
<div class="a" style="left:214px;top:170px;width:651px;height:41px;background:#c9d3e2"></div>
<div class="t" style="left:220.71px;top:183.44px;font-size:15.7px;color:#a3adbd;">Panel grupowania</div>
<div class="a" style="left:214px;top:211px;width:651px;height:353px;background:#fff"></div>
<div class="a" style="left:214px;top:211px;width:651px;height:25px;background:linear-gradient(#f3f5f8,#eceff4 45%,#dfe3ea 50%,#dde1e8)"></div>
<div class="a" style="left:214px;top:211px;width:11px;height:25px;background:linear-gradient(#eef1f5,#dfe3ea)"></div>
<svg class="a" style="left:215.5px;top:219.0px;" width="9" height="9" viewBox="0 0 9 9"><path d="M4.5 0.5 V8.5 M0.5 4.5 H8.5 M1.7 1.7 L7.3 7.3 M7.3 1.7 L1.7 7.3" stroke="#1e222b" stroke-width="1.35"/><circle cx="4.5" cy="4.5" r="1.2" fill="#f0f2f5"/></svg>
<div class="t" style="left:226.71px;top:216.63px;font-size:15.7px;color:#4a5266;">Nr serii</div>
<div class="a" style="left:298.6px;top:211px;width:1px;height:25px;background:#d5d9e1"></div>
<div class="t" style="left:299.71px;top:216.63px;font-size:15.7px;color:#4a5266;">Produkt</div>
<div class="a" style="left:430px;top:211px;width:1px;height:25px;background:#d5d9e1"></div>
<div class="t" style="left:431.71px;top:216.63px;font-size:15.7px;color:#4a5266;">Nr zamówienia</div>
<div class="a" style="left:583px;top:211px;width:1px;height:25px;background:#d5d9e1"></div>
<div class="t" style="left:585.5px;top:216.63px;font-size:15.7px;color:#4a5266;">Zamawiający</div>
<div class="a" style="left:720.6px;top:211px;width:1px;height:25px;background:#d5d9e1"></div>
<div class="t" style="left:721.55px;top:216.63px;font-size:15.7px;color:#4a5266;">Ilość</div>
<div class="a" style="left:766px;top:211px;width:1px;height:25px;background:#d5d9e1"></div>
<div class="t" style="left:768.75px;top:216.63px;font-size:15.7px;color:#4a5266;">Jm</div>
<div class="a" style="left:800px;top:211px;width:1px;height:25px;background:#d5d9e1"></div>
<div class="t" style="left:802.93px;top:216.63px;font-size:15.7px;color:#4a5266;">Wartość</div>
<div class="a" style="left:214px;top:236px;width:651px;height:23px;background:#edf5ec"></div>
<div class="a" style="left:214px;top:236px;width:11px;height:25px;background:linear-gradient(90deg,#e4e8ee,#d9dee6)"></div>
<svg class="a" style="left:216.5px;top:243.5px;" width="6" height="8" viewBox="0 0 6 8"><ellipse cx="3" cy="2" rx="2.6" ry="1.7" fill="#fff" stroke="#1a1f2a" stroke-width="1.3"/><rect x="2.3" y="3.5" width="1.5" height="4.5" fill="#1a1f2a"/></svg>
<div class="t" style="left:144px;width:800px;text-align:center;top:240.94px;font-size:15.7px;color:#7b838f;letter-spacing:0.38px">kliknij aby dodać filtr</div>
<div class="a" style="left:225px;top:259px;width:640px;height:2px;background:#a9b2c1"></div>
<div class="a" style="left:225px;top:261px;width:640px;height:23px;background:linear-gradient(#fff8e8,#fff1d8)"></div>
<div class="a" style="left:214px;top:261px;width:11px;height:23px;background:linear-gradient(90deg,#e8ebf0,#d5dae2)"></div>
<div class="a" style="left:214px;top:283px;width:11px;height:1px;background:#f4f6f9"></div>
<svg class="a" style="left:218px;top:268.5px;" width="4" height="8" viewBox="0 0 4 8"><path d="M0 0 L4 4 L0 8Z" fill="#222"/></svg>
<div class="t" style="left:227.21px;top:265.94px;font-size:15.7px;color:#1b2436;">20</div>
<div class="t" style="left:299.71px;top:265.94px;font-size:15.7px;color:#1b2436;">Komoda standard</div>
<div class="t" style="left:432.5px;top:265.94px;font-size:15.7px;color:#1b2436;letter-spacing:0.25px">ZO 00005/PR/2025</div>
<div class="t" style="left:585.56px;top:265.94px;font-size:15.7px;color:#1b2436;">sklep_meblowy</div>
<div class="t" style="right:897.21px;top:265.94px;font-size:15.7px;color:#1b2436;">2</div>
<div class="t" style="left:768.56px;top:265.94px;font-size:15.7px;color:#1b2436;">szt</div>
<div class="a" style="left:800px;top:261px;width:65px;height:23px;overflow:hidden"><div class="t" style="right:-2px;top:4.9350000000000005px;font-size:15.7px">1 300</div></div>
<div class="a" style="left:225px;top:284px;width:640px;height:23px;background:#edf6ed"></div>
<div class="a" style="left:214px;top:284px;width:11px;height:23px;background:linear-gradient(90deg,#e8ebf0,#d5dae2)"></div>
<div class="a" style="left:214px;top:306px;width:11px;height:1px;background:#f4f6f9"></div>
<div class="t" style="left:227.4px;top:288.94px;font-size:15.7px;color:#1b2436;">31</div>
<div class="t" style="left:300.29px;top:288.94px;font-size:15.7px;color:#1b2436;">Stelaż drewniany</div>
<div class="t" style="left:432.5px;top:288.94px;font-size:15.7px;color:#1b2436;letter-spacing:0.25px">ZO 00013/PR/2025</div>
<div class="t" style="left:584.58px;top:288.94px;font-size:15.7px;color:#1b2436;letter-spacing:-0.45px">!NIEOKREŚLONY</div>
<div class="t" style="right:897.23px;top:288.94px;font-size:15.7px;color:#1b2436;">1</div>
<div class="t" style="left:768.56px;top:288.94px;font-size:15.7px;color:#1b2436;">szt</div>
<div class="a" style="left:800px;top:284px;width:65px;height:23px;overflow:hidden"><div class="t" style="right:-2px;top:4.9350000000000005px;font-size:15.7px">90</div></div>
<div class="a" style="left:214px;top:564px;width:651px;height:16px;background:#e9ebef"></div>
<svg class="a" style="left:219px;top:568px;" width="5" height="8" viewBox="0 0 5 8"><path d="M5 0 L0 4 L5 8Z" fill="#9aa3b0"/></svg>
<svg class="a" style="left:854px;top:568px;" width="5" height="8" viewBox="0 0 5 8"><path d="M0 0 L5 4 L0 8Z" fill="#9aa3b0"/></svg>
<div class="a" style="left:231px;top:565px;width:135px;height:14px;background:linear-gradient(#f4f5f8,#dcdfe6);border:1px solid #aab2be;border-radius:3px"></div>
<div class="a" style="left:295.5px;top:569px;width:1px;height:6px;background:#5a6272"></div>
<div class="a" style="left:298.0px;top:569px;width:1px;height:6px;background:#5a6272"></div>
<div class="a" style="left:300.5px;top:569px;width:1px;height:6px;background:#5a6272"></div>
<div class="t" style="left:140px;width:800px;text-align:center;top:583.32px;font-size:10.4px;color:#2a3346;letter-spacing:2.5px;-webkit-text-stroke:0">UKRYJ SZCZEGÓŁY [F8]</div>
<div class="a" style="left:214px;top:597px;width:651px;height:6px;background:#e8ecf2"></div>
<div class="a" style="left:537px;top:598px;width:2px;height:2px;background:#7f8ba0"></div>
<div class="a" style="left:540px;top:598px;width:2px;height:2px;background:#7f8ba0"></div>
<div class="a" style="left:543px;top:598px;width:2px;height:2px;background:#7f8ba0"></div>
<div class="a" style="left:546px;top:598px;width:2px;height:2px;background:#7f8ba0"></div>
<div class="a" style="left:218.6px;top:605px;width:232.4px;height:24px;background:linear-gradient(#f6f7f9,#eceef2 45%,#dfe2e8 50%,#d9dde4);border:1px solid #a9b2c0;border-bottom:none;border-radius:4px 4px 0 0"></div>
<svg class="a" style="left:272.346875px;top:610.0px;" width="16" height="16" viewBox="0 0 16 16"><rect x="2" y="0.5" width="10" height="14" fill="#f4f4f4" stroke="#9aa0a8"/><path d="M4 4 H10 M4 6.5 H10 M4 9 H8" stroke="#b8bec6"/><circle cx="12" cy="13" r="3.3" fill="#e82030"/><path d="M10.8 11.8 L13.2 14.2 M13.2 11.8 L10.8 14.2" stroke="#fff" stroke-width="0.9"/></svg>
<div class="t" style="left:292.47px;top:613.18px;font-size:10.7px;color:#1b2436;">Uwagi do zamówienia</div>
<div class="a" style="left:453px;top:605px;width:268.4px;height:24px;background:linear-gradient(#f6f7f9,#eceef2 45%,#dfe2e8 50%,#d9dde4);border:1px solid #a9b2c0;border-bottom:none;border-radius:4px 4px 0 0"></div>
<svg class="a" style="left:514.653125px;top:610.0px;" width="16" height="16" viewBox="0 0 16 16"><rect x="2" y="0.5" width="10" height="14" fill="#f4f4f4" stroke="#9aa0a8"/><path d="M4 4 H10 M4 6.5 H10 M4 9 H8" stroke="#b8bec6"/><circle cx="12" cy="13" r="3.3" fill="#2a80e0"/><path d="M12 11.5 V14.5 M10.5 13 H13.5" stroke="#fff" stroke-width="0.9"/></svg>
<div class="t" style="left:534.87px;top:613.18px;font-size:10.7px;color:#1b2436;">Uwagi klienta do produkcji</div>
<div class="a" style="left:723.4px;top:605px;width:137.20000000000005px;height:24px;background:linear-gradient(#f6f7f9,#eceef2 45%,#dfe2e8 50%,#d9dde4);border:1px solid #a9b2c0;border-bottom:none;border-radius:4px 4px 0 0"></div>
<svg class="a" style="left:759.234375px;top:610.0px;" width="16" height="16" viewBox="0 0 16 16"><rect x="4" y="1" width="8" height="2" fill="#f0a030"/><rect x="3" y="3" width="10" height="2" fill="#e84a40"/><rect x="1" y="5" width="14" height="10" rx="2" fill="#12a0f0"/></svg>
<div class="t" style="left:779.32px;top:613.18px;font-size:10.7px;color:#1b2436;">Elementy</div>
<div class="a" style="left:217.7px;top:630px;width:227.3px;height:26px;background:linear-gradient(#fffaf0,#fff4de 57%,#fde7a8 62%,#fde5a0);border:1px solid #b8c0cc;border-bottom:none;border-radius:4px 4px 0 0"></div>
<svg class="a" style="left:279.88125px;top:636.0px;" width="16" height="16" viewBox="0 0 16 16"><path d="M8 1 L3 7 L6 10" stroke="#e8801a" stroke-width="2.6" fill="none"/><path d="M8 6 L12 10 L8 15" stroke="#1a5a9a" stroke-width="2.6" fill="none"/></svg>
<div class="t" style="left:300.56px;top:639.18px;font-size:10.7px;color:#1b2436;">Zapotrzebowanie</div>
<div class="a" style="left:446.3px;top:631px;width:213.7px;height:25px;background:linear-gradient(#f6f7f9,#eceef2 45%,#dfe2e8 50%,#d9dde4);border:1px solid #a9b2c0;border-bottom:none;border-radius:4px 4px 0 0"></div>
<svg class="a" style="left:503.4625px;top:636.5px;" width="16" height="16" viewBox="0 0 16 16"><rect x="2" y="9" width="2" height="5" fill="#3aa040"/><rect x="5" y="6" width="2" height="8" fill="#3aa040"/><rect x="8" y="3" width="2" height="11" fill="#3aa040"/><rect x="11" y="1" width="2" height="13" fill="#8a94a6"/></svg>
<div class="t" style="left:523.96px;top:639.68px;font-size:10.7px;color:#1b2436;">Czasochłonność</div>
<div class="a" style="left:662px;top:631px;width:198.60000000000002px;height:25px;background:linear-gradient(#f6f7f9,#eceef2 45%,#dfe2e8 50%,#d9dde4);border:1px solid #a9b2c0;border-bottom:none;border-radius:4px 4px 0 0"></div>
<svg class="a" style="left:716.065625px;top:636.5px;" width="16" height="16" viewBox="0 0 16 16"><rect x="2" y="0.5" width="10" height="14" fill="#f4f4f4" stroke="#9aa0a8"/><path d="M4 4 H10 M4 6.5 H10 M4 9 H8" stroke="#b8bec6"/><circle cx="12" cy="13" r="3.3" fill="#f07a20"/><circle cx="12" cy="13" r="1.2" fill="#fff"/></svg>
<div class="t" style="left:736.27px;top:639.68px;font-size:10.7px;color:#1b2436;">Uwagi bieżące</div>
<div class="a" style="left:215px;top:656px;width:650px;height:4px;background:#fde5a0;border-radius:3px 3px 0 0"></div>
<div class="a" style="left:215px;top:660px;width:650px;height:132px;background:#bcc8da"></div>
<div class="a" style="left:215px;top:792px;width:650px;height:4px;background:#fde5a0;border-radius:0 0 3px 3px"></div>
<div class="a" style="left:534px;top:799px;width:2px;height:2px;background:#7f8ba0"></div>
<div class="a" style="left:537px;top:799px;width:2px;height:2px;background:#7f8ba0"></div>
<div class="a" style="left:540px;top:799px;width:2px;height:2px;background:#7f8ba0"></div>
<div class="a" style="left:543px;top:799px;width:2px;height:2px;background:#7f8ba0"></div>
<div class="a" style="left:215px;top:661px;width:33px;height:29px;background:#c3cedf"></div>
<div class="a" style="left:215px;top:689px;width:33px;height:2px;background:#f4f6fa"></div>
<svg class="a" style="left:226px;top:669px;" width="12" height="12" viewBox="0 0 12 12"><rect x="0.7" y="0.7" width="10.6" height="10.6" fill="#dfe8f6" stroke="#1a7ff0" stroke-width="1.4"/><path d="M3.2 3.2 L8.8 8.8 M8.8 3.2 L3.2 8.8" stroke="#f0a020" stroke-width="1.2"/><path d="M3 3 h2.6 M3 3 v2.6 M9 9 h-2.6 M9 9 v-2.6 M9 3 h-2.6 M9 3 v2.6 M3 9 h2.6 M3 9 v-2.6" stroke="#f0a020" stroke-width="1.2"/></svg>
<svg class="a" style="left:224px;top:696px;" width="16" height="16" viewBox="0 0 16 16"><path d="M8 1 L15 5 L8 9 L1 5Z" fill="#f4a0a0" stroke="#e04848" stroke-width="1"/><path d="M1 8 L8 12 L15 8" stroke="#e04848" stroke-width="1.2" fill="none"/><path d="M1 11 L8 15 L15 11" stroke="#e04848" stroke-width="1.2" fill="none"/></svg>
<svg class="a" style="left:224px;top:724.5px;" width="16" height="16" viewBox="0 0 16 16"><circle cx="8" cy="8" r="7.5" fill="#1a7ff0"/><path d="M8 4 V12 M4 8 H12" stroke="#fff" stroke-width="2"/></svg>
<svg class="a" style="left:223.5px;top:753px;" width="18" height="17" viewBox="0 0 18 17"><rect x="1" y="2.5" width="12" height="10" fill="none" stroke="#5a6478" stroke-width="1"/><rect x="2.8" y="4.2" width="1.8" height="6.8" fill="#8d98aa"/><rect x="9.2" y="4.2" width="1.8" height="6.8" fill="#8d98aa"/><rect x="5.4" y="1" width="2.8" height="12.8" fill="#3aaa48"/><circle cx="12.4" cy="12.4" r="3.7" fill="#2ca443" stroke="#e8f4ea" stroke-width="0.5"/><path d="M12.4 10.2 V14.6 M10.2 12.4 H14.6" stroke="#fff" stroke-width="1.3"/></svg>
<div class="a" style="left:248px;top:661px;width:567px;height:113px;background:#fff"></div>
<div class="a" style="left:248px;top:661px;width:567px;height:25px;background:linear-gradient(#f3f5f8,#eceff4 45%,#dfe3ea 50%,#dde1e8)"></div>
<div class="a" style="left:248px;top:661px;width:11.5px;height:25px;background:linear-gradient(#eef1f5,#dfe3ea)"></div>
<svg class="a" style="left:249.5px;top:669.0px;" width="9" height="9" viewBox="0 0 9 9"><path d="M4.5 0.5 V8.5 M0.5 4.5 H8.5 M1.7 1.7 L7.3 7.3 M7.3 1.7 L1.7 7.3" stroke="#1e222b" stroke-width="1.35"/><circle cx="4.5" cy="4.5" r="1.2" fill="#f0f2f5"/></svg>
<div class="t" style="left:262.77px;top:666.63px;font-size:15.7px;color:#4a5266;">Asortyment</div>
<div class="a" style="left:409.3px;top:661px;width:1px;height:25px;background:#d5d9e1"></div>
<div class="t" style="left:411.45px;top:666.63px;font-size:15.7px;color:#4a5266;">Jm</div>
<div class="a" style="left:449.9px;top:661px;width:1px;height:25px;background:#d5d9e1"></div>
<div class="t" style="left:451.5px;top:666.63px;font-size:15.7px;color:#4a5266;">Zużycie</div>
<div class="a" style="left:530px;top:661px;width:1px;height:25px;background:#d5d9e1"></div>
<div class="t" style="left:531.89px;top:666.63px;font-size:15.7px;color:#4a5266;">Status</div>
<div class="a" style="left:669.8px;top:661px;width:1px;height:25px;background:#d5d9e1"></div>
<div class="t" style="left:671.65px;top:666.63px;font-size:15.7px;color:#4a5266;">Typ reze<span style="letter-spacing:1.41px">...</span></div>
<div class="a" style="left:751.4px;top:661px;width:1px;height:25px;background:#d5d9e1"></div>
<div class="t" style="left:753.2px;top:666.63px;font-size:15.7px;color:#4a5266;">Zarezer..</div>
<svg class="a" style="left:654px;top:671px;" width="10" height="6" viewBox="0 0 10 6"><path d="M0 6 L5 0 L10 6Z" fill="#a5adb9"/></svg>
<div class="a" style="left:248px;top:686px;width:567px;height:23px;background:#edf5ec"></div>
<div class="a" style="left:248px;top:686px;width:11.5px;height:25px;background:linear-gradient(90deg,#e4e8ee,#d9dee6)"></div>
<svg class="a" style="left:250.5px;top:693.5px;" width="6" height="8" viewBox="0 0 6 8"><ellipse cx="3" cy="2" rx="2.6" ry="1.7" fill="#fff" stroke="#1a1f2a" stroke-width="1.3"/><rect x="2.3" y="3.5" width="1.5" height="4.5" fill="#1a1f2a"/></svg>
<div class="t" style="left:140px;width:800px;text-align:center;top:690.93px;font-size:15.7px;color:#7b838f;letter-spacing:0.38px">kliknij aby dodać filtr</div>
<div class="a" style="left:259.5px;top:709px;width:555.5px;height:2px;background:#a9b2c1"></div>
<div class="a" style="left:259.5px;top:711px;width:555.5px;height:23px;background:linear-gradient(#fff8e8,#fff1d8)"></div>
<div class="a" style="left:248px;top:711px;width:11.5px;height:23px;background:linear-gradient(90deg,#e8ebf0,#d5dae2)"></div>
<div class="a" style="left:248px;top:733px;width:11.5px;height:1px;background:#f4f6f9"></div>
<svg class="a" style="left:252px;top:718.5px;" width="4" height="8" viewBox="0 0 4 8"><path d="M0 0 L4 4 L0 8Z" fill="#222"/></svg>
<div class="t" style="left:262.01px;top:715.93px;font-size:15.7px;color:#1b2436;">Gałka drewniana</div>
<div class="t" style="left:411.26px;top:715.93px;font-size:15.7px;color:#1b2436;">szt</div>
<div class="t" style="right:1134.21px;top:715.93px;font-size:15.7px;color:#1b2436;">12</div>
<svg class="a" style="left:533.5px;top:715px;" width="16" height="16" viewBox="0 0 16 16"><circle cx="8" cy="8" r="7.5" fill="#13a03a"/><path d="M4 8.2 L7 11 L12 5" stroke="#fff" stroke-width="2.2" fill="none"/></svg>
<div class="t" style="left:551.71px;top:715.93px;font-size:15.7px;color:#1b2436;">Dostępny</div>
<svg class="a" style="left:704px;top:716px;" width="14" height="14" viewBox="0 0 14 14"><g stroke="#1f2946" stroke-width="1.25" fill="none" stroke-linecap="round" stroke-dasharray="1.6 0.6"><path d="M0.8 2.2 Q2.5 0.3 4.4 1.2 Q6 0.2 8 1 Q10.5 0.3 12.4 1.5"/><path d="M2 3.8 L4.4 6.8"/><path d="M4.4 1.2 L6.2 5.6"/><path d="M8.2 2 Q9.8 4.5 8.2 8.8"/><path d="M11.5 4.7 Q13.2 8.5 8.2 12.4"/><path d="M0.6 5.8 Q2 8.5 3.5 10.8 L4.4 13.5"/></g></svg>
<div class="a" style="left:248px;top:734px;width:567px;height:40px;background:linear-gradient(#e6e9ee,#dfe3e9 50%,#d9dde4)"></div>
<div class="a" style="left:262.4px;top:738.4px;width:144.6px;height:31.6px;background:#fff;border:1px solid #c8cfd9;border-radius:2px"></div>
<div class="t" style="left:273.64px;top:747.43px;font-size:15.7px;color:#1b2436;letter-spacing:0.4px">4 pozycji</div>
<div class="a" style="left:248px;top:774.5px;width:567px;height:16px;background:#e9ebef"></div>
<svg class="a" style="left:253px;top:778.5px;" width="5" height="8" viewBox="0 0 5 8"><path d="M5 0 L0 4 L5 8Z" fill="#9aa3b0"/></svg>
<svg class="a" style="left:804px;top:778.5px;" width="5" height="8" viewBox="0 0 5 8"><path d="M0 0 L5 4 L0 8Z" fill="#9aa3b0"/></svg>
<div class="a" style="left:265.7px;top:775.5px;width:111.90000000000003px;height:14px;background:linear-gradient(#f4f5f8,#dcdfe6);border:1px solid #aab2be;border-radius:3px"></div>
<div class="a" style="left:318.65px;top:779.5px;width:1px;height:6px;background:#5a6272"></div>
<div class="a" style="left:321.15px;top:779.5px;width:1px;height:6px;background:#5a6272"></div>
<div class="a" style="left:323.65px;top:779.5px;width:1px;height:6px;background:#5a6272"></div>
<div class="a" style="left:815px;top:661px;width:16px;height:113px;background:#e9ebef"></div>
<svg class="a" style="left:819px;top:668px;" width="8" height="5" viewBox="0 0 8 5"><path d="M0 5 L4 0 L8 5Z" fill="#9aa3b0"/></svg>
<svg class="a" style="left:819px;top:763px;" width="8" height="5" viewBox="0 0 8 5"><path d="M0 0 L4 5 L8 0Z" fill="#9aa3b0"/></svg>
<div class="a" style="left:816px;top:698px;width:14px;height:20px;background:linear-gradient(90deg,#f4f5f8,#dcdfe6);border:1px solid #aab2be;border-radius:3px"></div>
<div class="a" style="left:820px;top:704.0px;width:6px;height:1px;background:#5a6272"></div>
<div class="a" style="left:820px;top:706.5px;width:6px;height:1px;background:#5a6272"></div>
<div class="a" style="left:820px;top:709.0px;width:6px;height:1px;background:#5a6272"></div>
<svg class="a" style="left:839px;top:668px;" width="17" height="14" viewBox="0 0 17 14"><circle cx="2.5" cy="2" r="1.6" fill="none" stroke="#2a7fe0" stroke-width="1.1"/><circle cx="2.5" cy="7" r="1.6" fill="none" stroke="#2a7fe0" stroke-width="1.1"/><circle cx="2.5" cy="12" r="1.6" fill="none" stroke="#2a7fe0" stroke-width="1.1"/><path d="M6 2 H16 M6 7 H16 M6 12 H16" stroke="#2a3446" stroke-width="1.4"/></svg>
<div class="a" style="left:878px;top:91px;width:776px;height:727px;background:#bcc8da"></div>
<div class="a" style="left:877px;top:91px;width:1px;height:730px;background:#8d99ad"></div>
<svg class="a" style="left:887px;top:101px;" width="15" height="15" viewBox="0 0 15 15"><path d="M4 4 V1 H14 V14 H4 V11" stroke="#5a6478" stroke-width="1.2" fill="none"/><path d="M0 7.5 H8" stroke="#e8334a" stroke-width="2"/><path d="M6 4.5 L9.5 7.5 L6 10.5Z" fill="#e8334a"/></svg>
<svg class="a" style="left:916.3px;top:93px;" width="16" height="16" viewBox="0 0 16 16"><path d="M2 14 L3 10 L12 1 L15 4 L6 13Z" fill="#f4a020"/><path d="M12 1 L15 4 L13.5 5.5 L10.5 2.5Z" fill="#e84a40"/><path d="M2 14 L3 10 L6 13Z" fill="#f8e0b0"/></svg>
<div class="t" style="left:524.3px;width:800px;text-align:center;top:114.0px;font-size:10px;color:#1b2436;">Edytuj</div>
<svg class="a" style="left:952.9px;top:93px;" width="16" height="16" viewBox="0 0 16 16"><circle cx="8" cy="8" r="7" fill="#e8405a"/><path d="M5 5 L11 11 M11 5 L5 11" stroke="#fff" stroke-width="1.3"/></svg>
<div class="t" style="left:560.9px;width:800px;text-align:center;top:114.0px;font-size:10px;color:#1b2436;">Usuń</div>
<svg class="a" style="left:988.5px;top:93px;" width="16" height="16" viewBox="0 0 16 16"><path d="M8.5 8.5 L14 14" stroke="#9aaac4" stroke-width="2.4" stroke-linecap="round"/><path d="M0.3 3.2 L3.2 0.3 L7.6 4.7 L4.7 7.6Z" fill="#f0401a"/><path d="M2.2 2.2 L5.6 5.6" stroke="#902010" stroke-width="0.8"/><path d="M2.5 13.5 L10.5 5.5" stroke="#dde6f4" stroke-width="2.8" stroke-linecap="round"/><path d="M11 1.2 A3.2 3.2 0 1 0 14.8 5 L12.8 5.4 L10.6 3.2Z" fill="#dde6f4"/><circle cx="2.6" cy="13.4" r="2.2" fill="#dde6f4"/><circle cx="2.6" cy="13.4" r="0.8" fill="#bcc8da"/></svg>
<div class="t" style="left:596.5px;width:800px;text-align:center;top:114.0px;font-size:10px;color:#1b2436;">Opcje</div>
<svg class="a" style="left:1024.5px;top:93px;" width="16" height="16" viewBox="0 0 16 16"><rect x="0.5" y="0.5" width="15" height="15" fill="#fff" stroke="#e04848"/><path d="M3 4 V13 M5 4 V13 M7.5 4 V13 M10 4 V13 M12.5 4 V13" stroke="#222" stroke-width="1.3"/><path d="M3 2.5 H13" stroke="#e04848"/></svg>
<div class="t" style="left:632.5px;width:800px;text-align:center;top:114.0px;font-size:10px;color:#1b2436;">Serial</div>
<svg class="a" style="left:1060.6px;top:93px;" width="16" height="16" viewBox="0 0 16 16"><rect x="2" y="0.5" width="10" height="14" fill="#f4f4f4" stroke="#9aa0a8"/><path d="M4 4 H10 M4 6.5 H10 M4 9 H8" stroke="#b8bec6"/><circle cx="12" cy="13" r="3.3" fill="#e82030"/><rect x="10.8" y="12" width="2.4" height="2" fill="#fff"/></svg>
<div class="t" style="left:668.5999999999999px;width:800px;text-align:center;top:114.0px;font-size:10px;color:#1b2436;">WP-</div>
<svg class="a" style="left:1096.7px;top:93px;" width="16" height="16" viewBox="0 0 16 16"><rect x="4" y="1" width="8" height="4" fill="#fff" stroke="#555"/><rect x="0.5" y="5" width="15" height="7" rx="1.5" fill="#3a4050"/><rect x="3" y="10" width="10" height="5" fill="#4a90e0"/></svg>
<div class="t" style="left:704.7px;width:800px;text-align:center;top:114.0px;font-size:10px;color:#1b2436;">Druk.</div>
<svg class="a" style="left:1132.3px;top:93px;" width="16" height="16" viewBox="0 0 16 16"><rect x="1" y="2.5" width="14" height="12.5" fill="#eef0f4" stroke="#7a8496"/><rect x="1" y="2.5" width="14" height="3" fill="#7a8496"/><path d="M4 1 V4 M12 1 V4" stroke="#555" stroke-width="1.3"/><rect x="6" y="8" width="4" height="3" fill="#e83040"/><path d="M3 8.5 H5 M11 8.5 H13 M3 11.5 H5 M11 11.5 H13" stroke="#aab"/></svg>
<div class="t" style="left:740.3px;width:800px;text-align:center;top:114.0px;font-size:10px;color:#1b2436;">Term.</div>
<svg class="a" style="left:1168.4px;top:93px;" width="16" height="16" viewBox="0 0 16 16"><path d="M1 2 L15 2 L15 4 L9.5 8 L9.5 15 L6.5 15 L6.5 8 L1 4Z" fill="#1fb040"/></svg>
<div class="t" style="left:776.4000000000001px;width:800px;text-align:center;top:114.0px;font-size:10px;color:#1b2436;">Fltr.</div>
<div class="a" style="left:1201px;top:97px;width:122px;height:24px;background:#fff;border:1px solid #a8b2c2"></div>
<div class="t" style="left:1204.44px;top:103.2px;font-size:14px;color:#1b2436;">WSZYSTKIE</div>
<svg class="a" style="left:1308px;top:107px;" width="9" height="5" viewBox="0 0 9 5"><path d="M0 0 L9 0 L4.5 5Z" fill="#1b2436"/></svg>
<div class="a" style="left:1330px;top:101px;width:15px;height:15px;background:linear-gradient(#f2f4f7,#d6dbe3);border:1px solid #7a8496"></div>
<svg class="a" style="left:1332px;top:103px;" width="11" height="10" viewBox="0 0 11 10"><path d="M1 5 L4 9 L10 0.5" stroke="#111" stroke-width="1.8" fill="none"/></svg>
<div class="a" style="left:1351px;top:94px;width:132px;height:30px;background:#fff;border:1px solid #a8b2c2"></div>
<svg class="a" style="left:1487px;top:101px;" width="9" height="15" viewBox="0 0 9 15"><path d="M8 1 A7 7 0 0 0 8 14" stroke="#5a6478" stroke-width="1.5" fill="none"/><path d="M8 3 A5 5 0 0 0 8 12Z" fill="#5ab8f0"/></svg>
<svg class="a" style="left:1502px;top:100px;" width="18" height="17" viewBox="0 0 18 17"><rect x="1" y="2.5" width="12" height="10" fill="none" stroke="#5a6478" stroke-width="1"/><rect x="2.8" y="4.2" width="1.8" height="6.8" fill="#8d98aa"/><rect x="9.2" y="4.2" width="1.8" height="6.8" fill="#8d98aa"/><rect x="5.4" y="1" width="2.8" height="12.8" fill="#3aaa48"/><circle cx="12.4" cy="12.4" r="3.7" fill="#2ca443" stroke="#e8f4ea" stroke-width="0.5"/><path d="M12.4 10.2 V14.6 M10.2 12.4 H14.6" stroke="#fff" stroke-width="1.3"/></svg>
<div class="a" style="left:1530px;top:101px;width:15px;height:15px;background:linear-gradient(#f2f4f7,#d6dbe3);border:1px solid #98a2b2"></div>
<svg class="a" style="left:1556px;top:91px;" width="15" height="16" viewBox="0 0 15 16"><path d="M8 1 L3 7 L6 10" stroke="#e8801a" stroke-width="2.6" fill="none"/><path d="M8 6 L12 10 L8 15" stroke="#1a5a9a" stroke-width="2.6" fill="none"/></svg>
<svg class="a" style="left:1581px;top:92px;" width="9" height="15" viewBox="0 0 9 15"><path d="M8 1 L1.5 7.5 L8 14" stroke="#222" stroke-width="1.3" fill="none"/></svg>
<div class="a" style="left:1597px;top:91px;width:58px;height:17px;background:#fff;border:1px solid #a8b2c2"></div>
<div class="t" style="left:1599.74px;top:95.41px;font-size:9.3px;color:#1b2436;">Rok</div>
<div class="a" style="left:1553px;top:110px;width:70px;height:17px;background:#fff;border:1px solid #a8b2c2"></div>
<div class="t" style="left:1555.12px;top:113.28px;font-size:9.6px;color:#1b2436;">01.01.2025</div>
<svg class="a" style="left:1610px;top:117px;" width="8" height="4" viewBox="0 0 8 4"><path d="M0 0 L8 0 L4 4Z" fill="#1b2436"/></svg>
<div class="a" style="left:1625px;top:110px;width:30px;height:17px;background:#fff;border:1px solid #a8b2c2;overflow:hidden"><div class="t" style="left:1.5px;top:2.8px;font-size:9.6px">31.12.2025</div></div>
<div class="a" style="left:1654px;top:85px;width:1px;height:741px;background:#8d99ad"></div>
<div class="a" style="left:881px;top:128px;width:755px;height:41px;background:#c9d3e2"></div>
<div class="t" style="left:887.71px;top:141.94px;font-size:15.7px;color:#a3adbd;">Panel grupowania</div>
<div class="a" style="left:881px;top:169px;width:755px;height:266px;background:#fff;overflow:hidden"></div>
<div class="a" style="left:881px;top:169px;width:755px;height:25px;background:linear-gradient(#f3f5f8,#eceff4 45%,#dfe3ea 50%,#dde1e8)"></div>
<div class="a" style="left:881px;top:169px;width:11.4px;height:25px;background:linear-gradient(#eef1f5,#dfe3ea)"></div>
<svg class="a" style="left:882.5px;top:177.0px;" width="9" height="9" viewBox="0 0 9 9"><path d="M4.5 0.5 V8.5 M0.5 4.5 H8.5 M1.7 1.7 L7.3 7.3 M7.3 1.7 L1.7 7.3" stroke="#1e222b" stroke-width="1.35"/><circle cx="4.5" cy="4.5" r="1.2" fill="#f0f2f5"/></svg>
<div class="t" style="left:894.11px;top:174.63px;font-size:15.7px;color:#4a5266;">Nr serii</div>
<div class="a" style="left:972.4px;top:169px;width:1px;height:25px;background:#d5d9e1"></div>
<div class="t" style="left:974.11px;top:174.63px;font-size:15.7px;color:#4a5266;">Nr partii<span style="letter-spacing:1.41px">...</span></div>
<div class="a" style="left:1052.4px;top:169px;width:1px;height:25px;background:#d5d9e1"></div>
<div class="t" style="left:1053.71px;top:174.63px;font-size:15.7px;color:#4a5266;">Produkt</div>
<div class="a" style="left:1202px;top:169px;width:1px;height:25px;background:#d5d9e1"></div>
<div class="t" style="left:1204.29px;top:174.63px;font-size:15.7px;color:#4a5266;">Status produ<span style="letter-spacing:1.41px">...</span></div>
<div class="a" style="left:1316.4px;top:169px;width:1px;height:25px;background:#d5d9e1"></div>
<div class="t" style="left:1317.51px;top:174.63px;font-size:15.7px;color:#4a5266;">Postęp pro<span style="letter-spacing:1.41px">...</span></div>
<div class="a" style="left:1416.5px;top:169px;width:1px;height:25px;background:#d5d9e1"></div>
<div class="t" style="left:1417.55px;top:174.63px;font-size:15.7px;color:#4a5266;">Ilość</div>
<div class="a" style="left:1478px;top:169px;width:1px;height:25px;background:#d5d9e1"></div>
<div class="t" style="left:1480.45px;top:174.63px;font-size:15.7px;color:#4a5266;">Jm</div>
<div class="a" style="left:1512.4px;top:169px;width:1px;height:25px;background:#d5d9e1"></div>
<div class="t" style="left:1513.35px;top:174.63px;font-size:15.7px;color:#4a5266;">Ilość <span style="letter-spacing:1.41px">...</span></div>
<div class="a" style="left:1571.6px;top:169px;width:1px;height:25px;background:#d5d9e1"></div>
<div class="t" style="left:1572.51px;top:174.63px;font-size:15.7px;color:#4a5266;">Nr zlecen</div>
<svg class="a" style="left:1186px;top:178px;" width="10" height="6" viewBox="0 0 10 6"><path d="M0 6 L5 0 L10 6Z" fill="#a5adb9"/></svg>
<div class="a" style="left:1636px;top:169px;width:1px;height:25px;background:#bcc8da"></div>
<div class="a" style="left:881px;top:194px;width:755px;height:23px;background:#edf5ec"></div>
<div class="a" style="left:881px;top:194px;width:11.4px;height:25px;background:linear-gradient(90deg,#e4e8ee,#d9dee6)"></div>
<svg class="a" style="left:883.5px;top:201.5px;" width="6" height="8" viewBox="0 0 6 8"><ellipse cx="3" cy="2" rx="2.6" ry="1.7" fill="#fff" stroke="#1a1f2a" stroke-width="1.3"/><rect x="2.3" y="3.5" width="1.5" height="4.5" fill="#1a1f2a"/></svg>
<div class="t" style="left:863px;width:800px;text-align:center;top:198.94px;font-size:15.7px;color:#7b838f;letter-spacing:0.38px">kliknij aby dodać filtr</div>
<div class="a" style="left:892.4px;top:217px;width:743.6px;height:2px;background:#a9b2c1"></div>
<div class="a" style="left:881px;top:219px;width:755px;height:216px;overflow:hidden">
<div class="a" style="left:11.4px;top:0px;width:744px;height:23px;background:#f5f6f9"></div>
<div class="a" style="left:0;top:0px;width:11.4px;height:23px;background:linear-gradient(90deg,#e8ebf0,#d5dae2)"></div>
<div class="t" style="left:13.61px;top:4.94px;font-size:15.7px;color:#1b2436;letter-spacing:0px">21</div>
<div class="t" style="left:93.6px;top:4.94px;font-size:15.7px;color:#1b2436;letter-spacing:0px">68</div>
<div class="t" style="left:172.71px;top:4.94px;font-size:15.7px;color:#1b2436;letter-spacing:0.15px">Fotel drewniany s<span style="letter-spacing:1.41px">...</span></div>
<svg class="a" style="left:324.5px;top:3.5px;" width="16" height="16" viewBox="0 0 16 16"><circle cx="8" cy="8" r="8" fill="#0b8a1e"/><path d="M5.8 3.8 L12.2 8 L5.8 12.2Z" fill="#fff"/></svg>
<div class="t" style="left:344.93px;top:4.94px;font-size:15.7px;color:#1b2436;letter-spacing:0.35px">W produkcji</div>
<div class="a" style="left:436.79999999999995px;top:0px;width:99px;height:23px;border:1px solid #8a93a3;background:linear-gradient(#f4f5f8,#e6e9ee 50%,#dadee5)"></div>
<div class="a" style="left:437.79999999999995px;top:1px;width:73.0px;height:21px;background:linear-gradient(#a8f0a8,#6ee46e 35%,#1ec83a 40%,#0cc030 75%,#3ad85a)"></div>
<div class="t" style="left:436.79999999999995px;width:99px;text-align:center;top:4.94px;font-size:15.7px;color:#1b2436">75 %</div>
<div class="t" style="right:160.54px;top:4.94px;font-size:15.7px;color:#1b2436">4</div>
<div class="t" style="left:599.26px;top:4.94px;font-size:15.7px;color:#1b2436;letter-spacing:0px">szt</div>
<div class="t" style="right:65.89px;top:4.94px;font-size:15.7px;color:#1b2436">0</div>
<div class="t" style="left:693.1px;top:4.94px;font-size:15.7px;color:#1b2436;letter-spacing:0.45px">ZPR 0000</div>
<div class="a" style="left:11.4px;top:23px;width:744px;height:23px;background:#edf6ed"></div>
<div class="a" style="left:0;top:23px;width:11.4px;height:23px;background:linear-gradient(90deg,#e8ebf0,#d5dae2)"></div>
<div class="t" style="left:13.8px;top:27.94px;font-size:15.7px;color:#1b2436;letter-spacing:0px">34</div>
<div class="t" style="left:93.72px;top:27.94px;font-size:15.7px;color:#1b2436;letter-spacing:0px">84</div>
<div class="t" style="left:173.85px;top:27.94px;font-size:15.7px;color:#1b2436;letter-spacing:0px">Łóżko AKORD</div>
<svg class="a" style="left:324.5px;top:26.5px;" width="16" height="16" viewBox="0 0 16 16"><circle cx="8" cy="8" r="8" fill="#0b8a1e"/><path d="M5.8 3.8 L12.2 8 L5.8 12.2Z" fill="#fff"/></svg>
<div class="t" style="left:344.93px;top:27.94px;font-size:15.7px;color:#1b2436;letter-spacing:0.35px">W produkcji</div>
<div class="a" style="left:436.79999999999995px;top:23px;width:99px;height:23px;border:1px solid #8a93a3;background:linear-gradient(#f4f5f8,#e6e9ee 50%,#dadee5)"></div>
<div class="t" style="left:436.79999999999995px;width:99px;text-align:center;top:27.94px;font-size:15.7px;color:#1b2436">0 %</div>
<div class="t" style="right:160.34px;top:27.94px;font-size:15.7px;color:#1b2436">5</div>
<div class="t" style="left:599.26px;top:27.94px;font-size:15.7px;color:#1b2436;letter-spacing:0px">szt</div>
<div class="t" style="right:65.89px;top:27.94px;font-size:15.7px;color:#1b2436">0</div>
<div class="t" style="left:693.1px;top:27.94px;font-size:15.7px;color:#1b2436;letter-spacing:0.45px">ZPR 0001</div>
<div class="a" style="left:11.4px;top:46px;width:744px;height:23px;background:#f5f6f9"></div>
<div class="a" style="left:0;top:46px;width:11.4px;height:23px;background:linear-gradient(90deg,#e8ebf0,#d5dae2)"></div>
<div class="t" style="left:13.2px;top:50.94px;font-size:15.7px;color:#1b2436;letter-spacing:0px">12</div>
<div class="t" style="left:94.04px;top:50.94px;font-size:15.7px;color:#1b2436;letter-spacing:0px">47</div>
<div class="t" style="left:173.26px;top:50.94px;font-size:15.7px;color:#1b2436;letter-spacing:0.15px">Okno balkon. dwu<span style="letter-spacing:1.41px">...</span></div>
<svg class="a" style="left:324.5px;top:49.5px;" width="16" height="16" viewBox="0 0 16 16"><circle cx="8" cy="8" r="8" fill="#0b8a1e"/><path d="M5.8 3.8 L12.2 8 L5.8 12.2Z" fill="#fff"/></svg>
<div class="t" style="left:344.93px;top:50.94px;font-size:15.7px;color:#1b2436;letter-spacing:0.35px">W produkcji</div>
<div class="a" style="left:436.79999999999995px;top:46px;width:99px;height:23px;border:1px solid #8a93a3;background:linear-gradient(#f4f5f8,#e6e9ee 50%,#dadee5)"></div>
<div class="t" style="left:436.79999999999995px;width:99px;text-align:center;top:50.94px;font-size:15.7px;color:#1b2436">0 %</div>
<div class="t" style="right:160.23px;top:50.94px;font-size:15.7px;color:#1b2436">1</div>
<div class="t" style="left:599.26px;top:50.94px;font-size:15.7px;color:#1b2436;letter-spacing:0px">szt</div>
<div class="t" style="right:65.89px;top:50.94px;font-size:15.7px;color:#1b2436">0</div>
<div class="t" style="left:693.1px;top:50.94px;font-size:15.7px;color:#1b2436;letter-spacing:0.45px">ZPR 0000</div>
<div class="a" style="left:11.4px;top:69px;width:744px;height:23px;background:#edf6ed"></div>
<div class="a" style="left:0;top:69px;width:11.4px;height:23px;background:linear-gradient(90deg,#e8ebf0,#d5dae2)"></div>
<div class="t" style="left:13.2px;top:73.94px;font-size:15.7px;color:#1b2436;letter-spacing:0px">14</div>
<div class="t" style="left:94.04px;top:73.94px;font-size:15.7px;color:#1b2436;letter-spacing:0px">49</div>
<div class="t" style="left:173.26px;top:73.94px;font-size:15.7px;color:#1b2436;letter-spacing:0.15px">Okno balkon. dwu<span style="letter-spacing:1.41px">...</span></div>
<svg class="a" style="left:324.5px;top:72.5px;" width="16" height="16" viewBox="0 0 16 16"><circle cx="8" cy="8" r="8" fill="#0b8a1e"/><path d="M5.8 3.8 L12.2 8 L5.8 12.2Z" fill="#fff"/></svg>
<div class="t" style="left:344.93px;top:73.94px;font-size:15.7px;color:#1b2436;letter-spacing:0.35px">W produkcji</div>
<div class="a" style="left:436.79999999999995px;top:69px;width:99px;height:23px;border:1px solid #8a93a3;background:linear-gradient(#f4f5f8,#e6e9ee 50%,#dadee5)"></div>
<div class="t" style="left:436.79999999999995px;width:99px;text-align:center;top:73.94px;font-size:15.7px;color:#1b2436">0 %</div>
<div class="t" style="right:160.23px;top:73.94px;font-size:15.7px;color:#1b2436">1</div>
<div class="t" style="left:599.26px;top:73.94px;font-size:15.7px;color:#1b2436;letter-spacing:0px">szt</div>
<div class="t" style="right:65.89px;top:73.94px;font-size:15.7px;color:#1b2436">0</div>
<div class="t" style="left:693.1px;top:73.94px;font-size:15.7px;color:#1b2436;letter-spacing:0.45px">ZPR 0000</div>
<div class="a" style="left:11.4px;top:92px;width:744px;height:23px;background:linear-gradient(#fff8e8,#fff1d8)"></div>
<div class="a" style="left:0;top:92px;width:11.4px;height:23px;background:linear-gradient(90deg,#e8ebf0,#d5dae2)"></div>
<svg class="a" style="left:4px;top:99.5px" width="4" height="8"><path d="M0 0 L4 4 L0 8Z" fill="#222"/></svg>
<div class="t" style="left:13.2px;top:96.94px;font-size:15.7px;color:#1b2436;letter-spacing:0px">15</div>
<div class="t" style="left:93.77px;top:96.94px;font-size:15.7px;color:#1b2436;letter-spacing:0px">50</div>
<div class="t" style="left:173.26px;top:96.94px;font-size:15.7px;color:#1b2436;letter-spacing:0.15px">Okno balkon. dwu<span style="letter-spacing:1.41px">...</span></div>
<svg class="a" style="left:324.5px;top:95.5px;" width="16" height="16" viewBox="0 0 16 16"><circle cx="8" cy="8" r="8" fill="#0b8a1e"/><path d="M5.8 3.8 L12.2 8 L5.8 12.2Z" fill="#fff"/></svg>
<div class="t" style="left:344.93px;top:96.94px;font-size:15.7px;color:#1b2436;letter-spacing:0.35px">W produkcji</div>
<div class="a" style="left:436.79999999999995px;top:92px;width:99px;height:23px;border:1px solid #8a93a3;background:linear-gradient(#f4f5f8,#e6e9ee 50%,#dadee5)"></div>
<div class="t" style="left:436.79999999999995px;width:99px;text-align:center;top:96.94px;font-size:15.7px;color:#1b2436">0 %</div>
<div class="t" style="right:160.23px;top:96.94px;font-size:15.7px;color:#1b2436">1</div>
<div class="t" style="left:599.26px;top:96.94px;font-size:15.7px;color:#1b2436;letter-spacing:0px">szt</div>
<div class="t" style="right:65.89px;top:96.94px;font-size:15.7px;color:#1b2436">0</div>
<div class="t" style="left:693.1px;top:96.94px;font-size:15.7px;color:#1b2436;letter-spacing:0.45px">ZPR 0000</div>
<div class="a" style="left:11.4px;top:115px;width:744px;height:23px;background:#edf6ed"></div>
<div class="a" style="left:0;top:115px;width:11.4px;height:23px;background:linear-gradient(90deg,#e8ebf0,#d5dae2)"></div>
<div class="t" style="left:13.2px;top:119.94px;font-size:15.7px;color:#1b2436;letter-spacing:0px">16</div>
<div class="t" style="left:93.77px;top:119.94px;font-size:15.7px;color:#1b2436;letter-spacing:0px">51</div>
<div class="t" style="left:173.26px;top:119.94px;font-size:15.7px;color:#1b2436;letter-spacing:0.15px">Okno balkon. dwu<span style="letter-spacing:1.41px">...</span></div>
<svg class="a" style="left:324.5px;top:118.5px;" width="16" height="16" viewBox="0 0 16 16"><circle cx="8" cy="8" r="8" fill="#0b8a1e"/><path d="M5.8 3.8 L12.2 8 L5.8 12.2Z" fill="#fff"/></svg>
<div class="t" style="left:344.93px;top:119.94px;font-size:15.7px;color:#1b2436;letter-spacing:0.35px">W produkcji</div>
<div class="a" style="left:436.79999999999995px;top:115px;width:99px;height:23px;border:1px solid #8a93a3;background:linear-gradient(#f4f5f8,#e6e9ee 50%,#dadee5)"></div>
<div class="t" style="left:436.79999999999995px;width:99px;text-align:center;top:119.94px;font-size:15.7px;color:#1b2436">0 %</div>
<div class="t" style="right:160.23px;top:119.94px;font-size:15.7px;color:#1b2436">1</div>
<div class="t" style="left:599.26px;top:119.94px;font-size:15.7px;color:#1b2436;letter-spacing:0px">szt</div>
<div class="t" style="right:65.89px;top:119.94px;font-size:15.7px;color:#1b2436">0</div>
<div class="t" style="left:693.1px;top:119.94px;font-size:15.7px;color:#1b2436;letter-spacing:0.45px">ZPR 0000</div>
<div class="a" style="left:11.4px;top:138px;width:744px;height:23px;background:#f5f6f9"></div>
<div class="a" style="left:0;top:138px;width:11.4px;height:23px;background:linear-gradient(90deg,#e8ebf0,#d5dae2)"></div>
<div class="t" style="left:13.2px;top:142.94px;font-size:15.7px;color:#1b2436;letter-spacing:0px">19</div>
<div class="t" style="left:93.77px;top:142.94px;font-size:15.7px;color:#1b2436;letter-spacing:0px">55</div>
<div class="t" style="left:173.26px;top:142.94px;font-size:15.7px;color:#1b2436;letter-spacing:0px">Okno drewniane</div>
<svg class="a" style="left:324.5px;top:141.5px;" width="16" height="16" viewBox="0 0 16 16"><circle cx="8" cy="8" r="8" fill="#0b8a1e"/><path d="M5.8 3.8 L12.2 8 L5.8 12.2Z" fill="#fff"/></svg>
<div class="t" style="left:344.93px;top:142.94px;font-size:15.7px;color:#1b2436;letter-spacing:0.35px">W produkcji</div>
<div class="a" style="left:436.79999999999995px;top:138px;width:99px;height:23px;border:1px solid #8a93a3;background:linear-gradient(#f4f5f8,#e6e9ee 50%,#dadee5)"></div>
<div class="a" style="left:437.79999999999995px;top:139px;width:38.7px;height:21px;background:linear-gradient(#a8f0a8,#6ee46e 35%,#1ec83a 40%,#0cc030 75%,#3ad85a)"></div>
<div class="t" style="left:436.79999999999995px;width:99px;text-align:center;top:142.94px;font-size:15.7px;color:#1b2436">40 %</div>
<div class="t" style="right:160.21px;top:142.94px;font-size:15.7px;color:#1b2436">2</div>
<div class="t" style="left:599.26px;top:142.94px;font-size:15.7px;color:#1b2436;letter-spacing:0px">szt</div>
<div class="t" style="right:65.89px;top:142.94px;font-size:15.7px;color:#1b2436">0</div>
<div class="t" style="left:693.1px;top:142.94px;font-size:15.7px;color:#1b2436;letter-spacing:0.45px">ZPR 0000</div>
<div class="a" style="left:11.4px;top:161px;width:744px;height:23px;background:#edf6ed"></div>
<div class="a" style="left:0;top:161px;width:11.4px;height:23px;background:linear-gradient(90deg,#e8ebf0,#d5dae2)"></div>
<div class="t" style="left:13.61px;top:165.94px;font-size:15.7px;color:#1b2436;letter-spacing:0px">29</div>
<div class="t" style="left:93.72px;top:165.94px;font-size:15.7px;color:#1b2436;letter-spacing:0px">85</div>
<div class="t" style="left:173.29px;top:165.94px;font-size:15.7px;color:#1b2436;letter-spacing:0px">Stelaż drewniany</div>
<svg class="a" style="left:324.5px;top:165px;" width="16" height="16" viewBox="0 0 16 16"><circle cx="8" cy="8" r="8" fill="#ff7a00"/><circle cx="8" cy="8" r="5.3" fill="none" stroke="#ffe0c0" stroke-width="0.9"/><path d="M8 2.6 V8 H2.6 A5.4 5.4 0 0 1 8 2.6Z" fill="#fff"/></svg>
<div class="t" style="left:343.71px;top:165.94px;font-size:15.7px;color:#1b2436;letter-spacing:0.35px">Planowanie</div>
<div class="a" style="left:436.79999999999995px;top:161px;width:99px;height:23px;border:1px solid #8a93a3;background:linear-gradient(#f4f5f8,#e6e9ee 50%,#dadee5)"></div>
<div class="t" style="left:436.79999999999995px;width:99px;text-align:center;top:165.94px;font-size:15.7px;color:#1b2436">0 %</div>
<div class="t" style="right:160.23px;top:165.94px;font-size:15.7px;color:#1b2436">1</div>
<div class="t" style="left:599.26px;top:165.94px;font-size:15.7px;color:#1b2436;letter-spacing:0px">szt</div>
<div class="t" style="right:65.89px;top:165.94px;font-size:15.7px;color:#1b2436">0</div>
<div class="t" style="left:693.1px;top:165.94px;font-size:15.7px;color:#1b2436;letter-spacing:0.45px">ZPR 0001</div>
<div class="a" style="left:11.4px;top:184px;width:744px;height:23px;background:#f5f6f9"></div>
<div class="a" style="left:0;top:184px;width:11.4px;height:23px;background:linear-gradient(90deg,#e8ebf0,#d5dae2)"></div>
<div class="t" style="left:13.8px;top:188.94px;font-size:15.7px;color:#1b2436;letter-spacing:0px">30</div>
<div class="t" style="left:93.72px;top:188.94px;font-size:15.7px;color:#1b2436;letter-spacing:0px">86</div>
<div class="t" style="left:173.29px;top:188.94px;font-size:15.7px;color:#1b2436;letter-spacing:0px">Stelaż drewniany</div>
<svg class="a" style="left:324.5px;top:188px;" width="16" height="16" viewBox="0 0 16 16"><circle cx="8" cy="8" r="8" fill="#ff7a00"/><circle cx="8" cy="8" r="5.3" fill="none" stroke="#ffe0c0" stroke-width="0.9"/><path d="M8 2.6 V8 H2.6 A5.4 5.4 0 0 1 8 2.6Z" fill="#fff"/></svg>
<div class="t" style="left:343.71px;top:188.94px;font-size:15.7px;color:#1b2436;letter-spacing:0.35px">Planowanie</div>
<div class="a" style="left:436.79999999999995px;top:184px;width:99px;height:23px;border:1px solid #8a93a3;background:linear-gradient(#f4f5f8,#e6e9ee 50%,#dadee5)"></div>
<div class="t" style="left:436.79999999999995px;width:99px;text-align:center;top:188.94px;font-size:15.7px;color:#1b2436">0 %</div>
<div class="t" style="right:160.23px;top:188.94px;font-size:15.7px;color:#1b2436">1</div>
<div class="t" style="left:599.26px;top:188.94px;font-size:15.7px;color:#1b2436;letter-spacing:0px">szt</div>
<div class="t" style="right:65.89px;top:188.94px;font-size:15.7px;color:#1b2436">0</div>
<div class="t" style="left:693.1px;top:188.94px;font-size:15.7px;color:#1b2436;letter-spacing:0.45px">ZPR 0001</div>
<div class="a" style="left:11.4px;top:207px;width:744px;height:23px;background:#edf6ed"></div>
<div class="a" style="left:0;top:207px;width:11.4px;height:23px;background:linear-gradient(90deg,#e8ebf0,#d5dae2)"></div>
<div class="t" style="left:13.8px;top:211.94px;font-size:15.7px;color:#1b2436;letter-spacing:0px">33</div>
<div class="t" style="left:93.72px;top:211.94px;font-size:15.7px;color:#1b2436;letter-spacing:0px">88</div>
<div class="t" style="left:173.29px;top:211.94px;font-size:15.7px;color:#1b2436;letter-spacing:0px">Stelaż drewniany</div>
<svg class="a" style="left:324.5px;top:211px;" width="16" height="16" viewBox="0 0 16 16"><circle cx="8" cy="8" r="8" fill="#ff7a00"/><circle cx="8" cy="8" r="5.3" fill="none" stroke="#ffe0c0" stroke-width="0.9"/><path d="M8 2.6 V8 H2.6 A5.4 5.4 0 0 1 8 2.6Z" fill="#fff"/></svg>
<div class="t" style="left:343.71px;top:211.94px;font-size:15.7px;color:#1b2436;letter-spacing:0.35px">Planowanie</div>
<div class="a" style="left:436.79999999999995px;top:207px;width:99px;height:23px;border:1px solid #8a93a3;background:linear-gradient(#f4f5f8,#e6e9ee 50%,#dadee5)"></div>
<div class="t" style="left:436.79999999999995px;width:99px;text-align:center;top:211.94px;font-size:15.7px;color:#1b2436">0 %</div>
<div class="t" style="right:160.23px;top:211.94px;font-size:15.7px;color:#1b2436">1</div>
<div class="t" style="left:599.26px;top:211.94px;font-size:15.7px;color:#1b2436;letter-spacing:0px">szt</div>
<div class="t" style="right:65.89px;top:211.94px;font-size:15.7px;color:#1b2436">0</div>
<div class="t" style="left:693.1px;top:211.94px;font-size:15.7px;color:#1b2436;letter-spacing:0.45px">ZPR 0001</div>
</div>
<div class="a" style="left:881px;top:435px;width:755px;height:40px;background:linear-gradient(#e6e9ee,#dfe3e9 50%,#d9dde4)"></div>
<div class="a" style="left:881px;top:435px;width:755px;height:1px;background:#c3cad5"></div>
<div class="a" style="left:895.6px;top:438.8px;width:74.8px;height:31.2px;background:#fff;border:1px solid #c8cfd9;border-radius:2px;overflow:hidden"><div class="t" style="left:10.5px;top:8.535px;font-size:15.7px;color:#1b2436;letter-spacing:0.45px">12 pozycji</div></div>
<div class="a" style="left:1419.5px;top:438.8px;width:57px;height:31.2px;background:#fff;border:1px solid #c8cfd9;border-radius:2px"><div class="t" style="left:6px;top:8.535px;font-size:15.7px;color:#1b2436">Ilość:</div></div>
<div class="a" style="left:881px;top:474.5px;width:755px;height:16px;background:#e9ebef"></div>
<svg class="a" style="left:886px;top:478.5px;" width="5" height="8" viewBox="0 0 5 8"><path d="M5 0 L0 4 L5 8Z" fill="#9aa3b0"/></svg>
<svg class="a" style="left:1625px;top:478.5px;" width="5" height="8" viewBox="0 0 5 8"><path d="M0 0 L5 4 L0 8Z" fill="#9aa3b0"/></svg>
<div class="a" style="left:898.5px;top:475.5px;width:130.5px;height:14px;background:linear-gradient(#f4f5f8,#dcdfe6);border:1px solid #aab2be;border-radius:3px"></div>
<div class="a" style="left:960.75px;top:479.5px;width:1px;height:6px;background:#5a6272"></div>
<div class="a" style="left:963.25px;top:479.5px;width:1px;height:6px;background:#5a6272"></div>
<div class="a" style="left:965.75px;top:479.5px;width:1px;height:6px;background:#5a6272"></div>
<div class="a" style="left:1636px;top:128px;width:18px;height:347px;background:#e9ebef"></div>
<svg class="a" style="left:1641px;top:134px;" width="8" height="5" viewBox="0 0 8 5"><path d="M0 5 L4 0 L8 5Z" fill="#9aa3b0"/></svg>
<svg class="a" style="left:1641px;top:464px;" width="8" height="5" viewBox="0 0 8 5"><path d="M0 0 L4 5 L8 0Z" fill="#9aa3b0"/></svg>
<div class="a" style="left:1637px;top:145px;width:16px;height:230px;background:linear-gradient(90deg,#f4f5f8,#dcdfe6);border:1px solid #aab2be;border-radius:3px"></div>
<div class="a" style="left:1641px;top:258.0px;width:7px;height:1px;background:#5a6272"></div>
<div class="a" style="left:1641px;top:260.5px;width:7px;height:1px;background:#5a6272"></div>
<div class="a" style="left:1641px;top:263.0px;width:7px;height:1px;background:#5a6272"></div>
<div class="a" style="left:1636px;top:474.5px;width:18px;height:16px;background:#bcc8da"></div>
<div class="a" style="left:1260px;top:492px;width:2px;height:2px;background:#7f8ba0"></div>
<div class="a" style="left:1263px;top:492px;width:2px;height:2px;background:#7f8ba0"></div>
<div class="a" style="left:1266px;top:492px;width:2px;height:2px;background:#7f8ba0"></div>
<div class="a" style="left:1269px;top:492px;width:2px;height:2px;background:#7f8ba0"></div>
<div class="a" style="left:885.8px;top:499px;width:100.20000000000005px;height:24px;background:linear-gradient(#f6f7f9,#eceef2 45%,#dfe2e8 50%,#d9dde4);border:1px solid #a9b2c0;border-bottom:none;border-radius:4px 4px 0 0"></div>
<svg class="a" style="left:900.759375px;top:504.0px;" width="16" height="16" viewBox="0 0 16 16"><rect x="1" y="1" width="14" height="14" fill="#fbe8f0" stroke="#c04890" stroke-width="1.2"/><path d="M4 5 H12 M4 8 H12 M4 11 H12" stroke="#e8334a" stroke-width="1.3"/><path d="M4 5 H6 M4 8 H6 M4 11 H6" stroke="#f0a020" stroke-width="1.3"/></svg>
<div class="t" style="left:921.26px;top:507.19px;font-size:10.7px;color:#1b2436;">Czynności</div>
<div class="a" style="left:988px;top:499px;width:71px;height:24px;background:linear-gradient(#f6f7f9,#eceef2 45%,#dfe2e8 50%,#d9dde4);border:1px solid #a9b2c0;border-bottom:none;border-radius:4px 4px 0 0"></div>
<svg class="a" style="left:1000.828125px;top:504.0px;" width="16" height="16" viewBox="0 0 16 16"><path d="M8 1 L15 4.5 L15 12 L8 15 L1 12 L1 4.5Z" fill="#e8502a"/><path d="M8 8 L15 4.5 L15 12 L8 15Z" fill="#b83018"/><path d="M1 4.5 L8 1 L15 4.5 L8 8Z" fill="#f8903a"/></svg>
<div class="t" style="left:1020.92px;top:507.19px;font-size:10.7px;color:#1b2436;">Braki</div>
<div class="a" style="left:1061px;top:499px;width:102px;height:24px;background:linear-gradient(#f6f7f9,#eceef2 45%,#dfe2e8 50%,#d9dde4);border:1px solid #a9b2c0;border-bottom:none;border-radius:4px 4px 0 0"></div>
<svg class="a" style="left:1076.859375px;top:504.0px;" width="16" height="16" viewBox="0 0 16 16"><circle cx="5.5" cy="10.5" r="4" fill="none" stroke="#555b66" stroke-width="2.5" stroke-dasharray="2 1.2"/><circle cx="5.5" cy="10.5" r="1.8" fill="#555b66"/><circle cx="12" cy="4" r="2.6" fill="none" stroke="#555b66" stroke-width="1.6" stroke-dasharray="1.5 1"/></svg>
<div class="t" style="left:1097.02px;top:507.19px;font-size:10.7px;color:#1b2436;">Parametry</div>
<div class="a" style="left:1165px;top:499px;width:134px;height:24px;background:linear-gradient(#f6f7f9,#eceef2 45%,#dfe2e8 50%,#d9dde4);border:1px solid #a9b2c0;border-bottom:none;border-radius:4px 4px 0 0"></div>
<svg class="a" style="left:1182.3125px;top:504.0px;" width="16" height="16" viewBox="0 0 16 16"><circle cx="7" cy="9" r="6" fill="#fff" stroke="#555b66" stroke-width="1.4"/><path d="M7 9 L4 6" stroke="#e8334a" stroke-width="1.4"/><rect x="5.5" y="1" width="3" height="2" fill="#555b66"/><path d="M10 11 H15 L14 15 H11Z" fill="#e8334a"/></svg>
<div class="t" style="left:1202.76px;top:507.19px;font-size:10.7px;color:#1b2436;">Czasochłonność</div>
<div class="a" style="left:1301px;top:499px;width:144px;height:24px;background:linear-gradient(#f6f7f9,#eceef2 45%,#dfe2e8 50%,#d9dde4);border:1px solid #a9b2c0;border-bottom:none;border-radius:4px 4px 0 0"></div>
<svg class="a" style="left:1319.75px;top:504.0px;" width="16" height="16" viewBox="0 0 16 16"><path d="M1 2 H5.5 V10 Q8 12 10.5 10 V2 H15 V11 Q15 15 8 15 Q1 15 1 11Z" fill="#f06030"/><rect x="1" y="1" width="4.5" height="3" fill="#40c0c0"/><rect x="10.5" y="1" width="4.5" height="3" fill="#40c0c0"/></svg>
<div class="t" style="left:1339.92px;top:507.19px;font-size:10.7px;color:#1b2436;">Produkty uboczne</div>
<div class="a" style="left:1447px;top:499px;width:99px;height:24px;background:linear-gradient(#f6f7f9,#eceef2 45%,#dfe2e8 50%,#d9dde4);border:1px solid #a9b2c0;border-bottom:none;border-radius:4px 4px 0 0"></div>
<svg class="a" style="left:1461.953125px;top:504.0px;" width="16" height="16" viewBox="0 0 16 16"><rect x="2" y="9" width="2" height="6" fill="#3aa040"/><rect x="5.5" y="6" width="2" height="9" fill="#3aa040"/><rect x="9" y="3" width="2" height="12" fill="#3aa040"/><rect x="12.5" y="1" width="2" height="14" fill="#8a94a6"/></svg>
<div class="t" style="left:1482.49px;top:507.19px;font-size:10.7px;color:#1b2436;">Oblozenie</div>
<div class="a" style="left:1548px;top:499px;width:100px;height:24px;background:linear-gradient(#f6f7f9,#eceef2 45%,#dfe2e8 50%,#d9dde4);border:1px solid #a9b2c0;border-bottom:none;border-radius:4px 4px 0 0"></div>
<svg class="a" style="left:1565.234375px;top:504.0px;" width="16" height="16" viewBox="0 0 16 16"><rect x="4" y="1" width="8" height="2" fill="#f0a030"/><rect x="3" y="3" width="10" height="2" fill="#e84a40"/><rect x="1" y="5" width="14" height="10" rx="2" fill="#12a0f0"/></svg>
<div class="t" style="left:1585.32px;top:507.19px;font-size:10.7px;color:#1b2436;">Elementy</div>
<div class="a" style="left:885.8px;top:525px;width:94.20000000000005px;height:25px;background:linear-gradient(#f6f7f9,#eceef2 45%,#dfe2e8 50%,#d9dde4);border:1px solid #a9b2c0;border-bottom:none;border-radius:4px 4px 0 0"></div>
<svg class="a" style="left:900.728125px;top:530.5px;" width="16" height="16" viewBox="0 0 16 16"><rect x="4" y="2" width="10" height="10" rx="2" fill="#dce8fb" stroke="#3a80e0" stroke-width="1.3"/><path d="M6 0.5 V2 M9 0.5 V2 M12 0.5 V2 M14 5 H15.5 M14 8 H15.5" stroke="#3a80e0"/><circle cx="4" cy="12" r="3.5" fill="#3a80e0"/><path d="M4 10 V14 M2 12 H6" stroke="#fff" stroke-width="1.2"/></svg>
<div class="t" style="left:921.19px;top:533.68px;font-size:10.7px;color:#1b2436;">Operacje</div>
<div class="a" style="left:982px;top:525px;width:110px;height:25px;background:linear-gradient(#f6f7f9,#eceef2 45%,#dfe2e8 50%,#d9dde4);border:1px solid #a9b2c0;border-bottom:none;border-radius:4px 4px 0 0"></div>
<svg class="a" style="left:996.8125px;top:530.5px;" width="16" height="16" viewBox="0 0 16 16"><rect x="1" y="5" width="9" height="10" fill="none" stroke="#3a80e0" stroke-width="1.3"/><rect x="6" y="1" width="9" height="9" fill="#fff" stroke="#3a80e0" stroke-width="1.3"/></svg>
<div class="t" style="left:1017.75px;top:533.68px;font-size:10.7px;color:#1b2436;">Wizualizacja</div>
<div class="a" style="left:1093px;top:524px;width:141px;height:26px;background:linear-gradient(#fffaf0,#fff4de 57%,#fde7a8 62%,#fde5a0);border:1px solid #b8c0cc;border-bottom:none;border-radius:4px 4px 0 0"></div>
<svg class="a" style="left:1112.03125px;top:530.0px;" width="16" height="16" viewBox="0 0 16 16"><path d="M8 1 L15 4 L8 7 L1 4Z" fill="#3a6ad0"/><path d="M1 7 L8 10 L15 7 L15 9 L8 12 L1 9Z" fill="#2a9ad8"/><path d="M1 11 L8 14 L15 11 L15 12.5 L8 15.5 L1 12.5Z" fill="#40b0a0"/><circle cx="8" cy="4" r="1.2" fill="#fff"/></svg>
<div class="t" style="left:1132.66px;top:533.18px;font-size:10.7px;color:#1b2436;">Zapotrzebowanie</div>
<div class="a" style="left:1235px;top:525px;width:77px;height:25px;background:linear-gradient(#f6f7f9,#eceef2 45%,#dfe2e8 50%,#d9dde4);border:1px solid #a9b2c0;border-bottom:none;border-radius:4px 4px 0 0"></div>
<svg class="a" style="left:1248.15625px;top:530.5px;" width="16" height="16" viewBox="0 0 16 16"><circle cx="8" cy="8" r="7.5" fill="#f8c820"/><rect x="7" y="4" width="2" height="8" fill="#2a6ad0"/></svg>
<div class="t" style="left:1268.37px;top:533.68px;font-size:10.7px;color:#1b2436;">Uwagi</div>
<div class="a" style="left:1314px;top:525px;width:66px;height:25px;background:linear-gradient(#f6f7f9,#eceef2 45%,#dfe2e8 50%,#d9dde4);border:1px solid #a9b2c0;border-bottom:none;border-radius:4px 4px 0 0"></div>
<svg class="a" style="left:1325.21875px;top:530.5px;" width="16" height="16" viewBox="0 0 16 16"><circle cx="8" cy="8" r="7" fill="#f8a020" stroke="#3a3a3a" stroke-width="1.3"/><path d="M8 8 L5 11 M8 8 L11 4" stroke="#3a3a3a" stroke-width="1.3"/></svg>
<div class="t" style="left:1345.32px;top:533.68px;font-size:10.7px;color:#1b2436;">RCP</div>
<div class="a" style="left:1382px;top:525px;width:105px;height:25px;background:linear-gradient(#f6f7f9,#eceef2 45%,#dfe2e8 50%,#d9dde4);border:1px solid #a9b2c0;border-bottom:none;border-radius:4px 4px 0 0"></div>
<svg class="a" style="left:1396.6875px;top:530.5px;" width="16" height="16" viewBox="0 0 16 16"><circle cx="8" cy="4.5" r="3.5" fill="#3aa040"/><path d="M2 13 Q8 6 14 13Z" fill="#3aa040"/><rect x="1" y="13" width="14" height="2" fill="#b8c0c8"/></svg>
<div class="t" style="left:1416.82px;top:533.68px;font-size:10.7px;color:#1b2436;">Pracownicy</div>
<div class="a" style="left:1488.6px;top:525px;width:66.20000000000005px;height:25px;background:linear-gradient(#f6f7f9,#eceef2 45%,#dfe2e8 50%,#d9dde4);border:1px solid #a9b2c0;border-bottom:none;border-radius:4px 4px 0 0"></div>
<svg class="a" style="left:1500.8093749999998px;top:530.5px;" width="16" height="16" viewBox="0 0 16 16"><rect x="2" y="0.5" width="10" height="14" fill="#f4f4f4" stroke="#9aa0a8"/><path d="M4 4 H10 M4 6.5 H10 M4 9 H8" stroke="#b8bec6"/><circle cx="12" cy="13" r="3.3" fill="#e82030"/><rect x="10.8" y="12" width="2.4" height="2" fill="#fff"/></svg>
<div class="t" style="left:1521.75px;top:533.68px;font-size:10.7px;color:#1b2436;">WP-</div>
<div class="a" style="left:1557px;top:525px;width:91px;height:25px;background:linear-gradient(#f6f7f9,#eceef2 45%,#dfe2e8 50%,#d9dde4);border:1px solid #a9b2c0;border-bottom:none;border-radius:4px 4px 0 0"></div>
<svg class="a" style="left:1573.09375px;top:530.5px;" width="16" height="16" viewBox="0 0 16 16"><rect x="1.5" y="0.5" width="10" height="14" fill="#fff" stroke="#555b66"/><path d="M3.5 4 H9.5 M3.5 6.5 H9.5 M3.5 9 H7" stroke="#555b66"/><rect x="9" y="9" width="6" height="6" fill="#2a6ad0"/></svg>
<div class="t" style="left:1593.22px;top:533.68px;font-size:10.7px;color:#1b2436;">PW/RW</div>
<div class="a" style="left:881px;top:550px;width:772px;height:4px;background:#fde5a0;border-radius:3px 3px 0 0"></div>
<div class="a" style="left:881px;top:554px;width:772px;height:238px;background:#bcc8da"></div>
<div class="a" style="left:881px;top:791.5px;width:772px;height:4px;background:#fde5a0;border-radius:0 0 3px 3px"></div>
<div class="a" style="left:881px;top:554px;width:1px;height:238px;background:#a3afc1"></div>
<div class="t" style="left:866px;width:800px;text-align:center;top:805.82px;font-size:10.4px;color:#2a3346;letter-spacing:2.5px;-webkit-text-stroke:0">UKRYJ SZCZEGÓŁY [F8]</div>
<div class="a" style="left:1261px;top:799px;width:2px;height:2px;background:#7f8ba0"></div>
<div class="a" style="left:1264px;top:799px;width:2px;height:2px;background:#7f8ba0"></div>
<div class="a" style="left:1267px;top:799px;width:2px;height:2px;background:#7f8ba0"></div>
<div class="a" style="left:1270px;top:799px;width:2px;height:2px;background:#7f8ba0"></div>
<div class="a" style="left:915px;top:555px;width:688px;height:180px;background:#fff"></div>
<div class="a" style="left:915px;top:554.5px;width:688px;height:25px;background:linear-gradient(#f3f5f8,#eceff4 45%,#dfe3ea 50%,#dde1e8)"></div>
<div class="a" style="left:915px;top:554.5px;width:11.7px;height:25px;background:linear-gradient(#eef1f5,#dfe3ea)"></div>
<svg class="a" style="left:916.5px;top:562.5px;" width="9" height="9" viewBox="0 0 9 9"><path d="M4.5 0.5 V8.5 M0.5 4.5 H8.5 M1.7 1.7 L7.3 7.3 M7.3 1.7 L1.7 7.3" stroke="#1e222b" stroke-width="1.35"/><circle cx="4.5" cy="4.5" r="1.2" fill="#f0f2f5"/></svg>
<div class="t" style="left:929.77px;top:560.13px;font-size:15.7px;color:#4a5266;">Asortyment</div>
<div class="a" style="left:1076.6px;top:554.5px;width:1px;height:25px;background:#d5d9e1"></div>
<div class="t" style="left:1078.75px;top:560.13px;font-size:15.7px;color:#4a5266;">Jm</div>
<div class="a" style="left:1116.2px;top:554.5px;width:1px;height:25px;background:#d5d9e1"></div>
<div class="t" style="left:1118.5px;top:560.13px;font-size:15.7px;color:#4a5266;">Zużycie</div>
<div class="a" style="left:1186.5px;top:554.5px;width:1px;height:25px;background:#d5d9e1"></div>
<div class="t" style="left:1188.29px;top:560.13px;font-size:15.7px;color:#4a5266;">Status</div>
<div class="a" style="left:1283.4px;top:554.5px;width:1px;height:25px;background:#d5d9e1"></div>
<div class="t" style="left:1285.65px;top:560.13px;font-size:15.7px;color:#4a5266;">Typ rezerw<span style="letter-spacing:1.41px">...</span></div>
<div class="a" style="left:1385.2px;top:554.5px;width:1px;height:25px;background:#d5d9e1"></div>
<div class="t" style="left:1387.5px;top:560.13px;font-size:15.7px;color:#4a5266;">Zarezerwo<span style="letter-spacing:1.41px">...</span></div>
<div class="a" style="left:1488.4px;top:554.5px;width:1px;height:25px;background:#d5d9e1"></div>
<div class="t" style="left:1489.71px;top:560.13px;font-size:15.7px;color:#4a5266;">Brak</div>
<div class="a" style="left:1568.5px;top:554.5px;width:1px;height:25px;background:#d5d9e1"></div>
<div class="t" style="left:1570.29px;top:560.13px;font-size:15.7px;color:#4a5266;">Stan</div>
<div class="a" style="left:915px;top:579.5px;width:688px;height:23px;background:#edf5ec"></div>
<div class="a" style="left:915px;top:579.5px;width:11.7px;height:25px;background:linear-gradient(90deg,#e4e8ee,#d9dee6)"></div>
<svg class="a" style="left:917.5px;top:587.0px;" width="6" height="8" viewBox="0 0 6 8"><ellipse cx="3" cy="2" rx="2.6" ry="1.7" fill="#fff" stroke="#1a1f2a" stroke-width="1.3"/><rect x="2.3" y="3.5" width="1.5" height="4.5" fill="#1a1f2a"/></svg>
<div class="t" style="left:863px;width:800px;text-align:center;top:584.43px;font-size:15.7px;color:#7b838f;letter-spacing:0.38px">kliknij aby dodać filtr</div>
<div class="a" style="left:926.7px;top:602.5px;width:676.3px;height:2px;background:#a9b2c1"></div>
<div class="a" style="left:915px;top:605px;width:688px;height:130px;overflow:hidden">
<div class="a" style="left:11.7px;top:0px;width:677px;height:23px;background:linear-gradient(#fff8e8,#fff1d8)"></div>
<div class="a" style="left:0;top:0px;width:11.7px;height:23px;background:linear-gradient(90deg,#e8ebf0,#d5dae2)"></div>
<svg class="a" style="left:4px;top:7.5px" width="4" height="8"><path d="M0 0 L4 4 L0 8Z" fill="#222"/></svg>
<div class="t" style="left:13.51px;top:4.94px;font-size:15.7px;color:#1b2436">Profil okienny 82/<span style="letter-spacing:1.41px">...</span></div>
<div class="t" style="left:162.96px;top:4.94px;font-size:15.7px;color:#1b2436">mb</div>
<div class="t" style="right:418.21px;top:4.94px;font-size:15.7px;color:#1b2436">7,2</div>
<svg class="a" style="left:275px;top:3.1999999999999993px;" width="16" height="16" viewBox="0 0 16 16"><circle cx="8" cy="8" r="7.5" fill="#13a03a"/><path d="M4 8.2 L7 11 L12 5" stroke="#fff" stroke-width="2.2" fill="none"/></svg>
<div class="t" style="left:294.21px;top:4.94px;font-size:15.7px;color:#1b2436">Dostępny</div>
<svg class="a" style="left:413px;top:5px;" width="14" height="14" viewBox="0 0 14 14"><g stroke="#1f2946" stroke-width="1.25" fill="none" stroke-linecap="round" stroke-dasharray="1.6 0.6"><path d="M0.8 2.2 Q2.5 0.3 4.4 1.2 Q6 0.2 8 1 Q10.5 0.3 12.4 1.5"/><path d="M2 3.8 L4.4 6.8"/><path d="M4.4 1.2 L6.2 5.6"/><path d="M8.2 2 Q9.8 4.5 8.2 8.8"/><path d="M11.5 4.7 Q13.2 8.5 8.2 12.4"/><path d="M0.6 5.8 Q2 8.5 3.5 10.8 L4.4 13.5"/></g></svg>
<div class="t" style="right:115.69px;top:4.94px;font-size:15.7px;color:#1b2436">0</div>
<div class="t" style="right:35.71px;top:4.94px;font-size:15.7px;color:#1b2436">7,2</div>
<div class="a" style="left:11.7px;top:23px;width:677px;height:23px;background:#edf6ed"></div>
<div class="a" style="left:0;top:23px;width:11.7px;height:23px;background:linear-gradient(90deg,#e8ebf0,#d5dae2)"></div>
<div class="t" style="left:13.51px;top:27.94px;font-size:15.7px;color:#1b2436">Profil skrzydeł okn<span style="letter-spacing:1.41px">...</span></div>
<div class="t" style="left:162.96px;top:27.94px;font-size:15.7px;color:#1b2436">mb</div>
<div class="t" style="right:418.54px;top:27.94px;font-size:15.7px;color:#1b2436">11,4</div>
<svg class="a" style="left:275px;top:26.2px;" width="16" height="16" viewBox="0 0 16 16"><circle cx="8" cy="8" r="7.5" fill="#13a03a"/><path d="M4 8.2 L7 11 L12 5" stroke="#fff" stroke-width="2.2" fill="none"/></svg>
<div class="t" style="left:294.21px;top:27.94px;font-size:15.7px;color:#1b2436">Dostępny</div>
<svg class="a" style="left:413px;top:28px;" width="14" height="14" viewBox="0 0 14 14"><g stroke="#1f2946" stroke-width="1.25" fill="none" stroke-linecap="round" stroke-dasharray="1.6 0.6"><path d="M0.8 2.2 Q2.5 0.3 4.4 1.2 Q6 0.2 8 1 Q10.5 0.3 12.4 1.5"/><path d="M2 3.8 L4.4 6.8"/><path d="M4.4 1.2 L6.2 5.6"/><path d="M8.2 2 Q9.8 4.5 8.2 8.8"/><path d="M11.5 4.7 Q13.2 8.5 8.2 12.4"/><path d="M0.6 5.8 Q2 8.5 3.5 10.8 L4.4 13.5"/></g></svg>
<div class="t" style="right:115.69px;top:27.94px;font-size:15.7px;color:#1b2436">0</div>
<div class="t" style="right:36.04px;top:27.94px;font-size:15.7px;color:#1b2436">11,4</div>
<div class="a" style="left:11.7px;top:46px;width:677px;height:23px;background:#f5f6f9"></div>
<div class="a" style="left:0;top:46px;width:11.7px;height:23px;background:linear-gradient(90deg,#e8ebf0,#d5dae2)"></div>
<div class="t" style="left:13.51px;top:50.94px;font-size:15.7px;color:#1b2436">Profil przylgi okn<span style="letter-spacing:1.41px">...</span></div>
<div class="t" style="left:162.96px;top:50.94px;font-size:15.7px;color:#1b2436">mb</div>
<div class="t" style="right:418.54px;top:50.94px;font-size:15.7px;color:#1b2436">11,4</div>
<svg class="a" style="left:275px;top:49.2px;" width="16" height="16" viewBox="0 0 16 16"><circle cx="8" cy="8" r="7.5" fill="#13a03a"/><path d="M4 8.2 L7 11 L12 5" stroke="#fff" stroke-width="2.2" fill="none"/></svg>
<div class="t" style="left:294.21px;top:50.94px;font-size:15.7px;color:#1b2436">Dostępny</div>
<svg class="a" style="left:413px;top:51px;" width="14" height="14" viewBox="0 0 14 14"><g stroke="#1f2946" stroke-width="1.25" fill="none" stroke-linecap="round" stroke-dasharray="1.6 0.6"><path d="M0.8 2.2 Q2.5 0.3 4.4 1.2 Q6 0.2 8 1 Q10.5 0.3 12.4 1.5"/><path d="M2 3.8 L4.4 6.8"/><path d="M4.4 1.2 L6.2 5.6"/><path d="M8.2 2 Q9.8 4.5 8.2 8.8"/><path d="M11.5 4.7 Q13.2 8.5 8.2 12.4"/><path d="M0.6 5.8 Q2 8.5 3.5 10.8 L4.4 13.5"/></g></svg>
<div class="t" style="right:115.69px;top:50.94px;font-size:15.7px;color:#1b2436">0</div>
<div class="t" style="right:36.04px;top:50.94px;font-size:15.7px;color:#1b2436">11,4</div>
<div class="a" style="left:11.7px;top:69px;width:677px;height:23px;background:#edf6ed"></div>
<div class="a" style="left:0;top:69px;width:11.7px;height:23px;background:linear-gradient(90deg,#e8ebf0,#d5dae2)"></div>
<div class="t" style="left:13.59px;top:73.94px;font-size:15.7px;color:#1b2436">Uszczelka okienna</div>
<div class="t" style="left:162.96px;top:73.94px;font-size:15.7px;color:#1b2436">mb</div>
<div class="t" style="right:418.21px;top:73.94px;font-size:15.7px;color:#1b2436">2</div>
<svg class="a" style="left:275px;top:72.2px;" width="16" height="16" viewBox="0 0 16 16"><circle cx="8" cy="8" r="7.5" fill="#13a03a"/><path d="M4 8.2 L7 11 L12 5" stroke="#fff" stroke-width="2.2" fill="none"/></svg>
<div class="t" style="left:294.21px;top:73.94px;font-size:15.7px;color:#1b2436">Dostępny</div>
<svg class="a" style="left:413px;top:74px;" width="14" height="14" viewBox="0 0 14 14"><g stroke="#1f2946" stroke-width="1.25" fill="none" stroke-linecap="round" stroke-dasharray="1.6 0.6"><path d="M0.8 2.2 Q2.5 0.3 4.4 1.2 Q6 0.2 8 1 Q10.5 0.3 12.4 1.5"/><path d="M2 3.8 L4.4 6.8"/><path d="M4.4 1.2 L6.2 5.6"/><path d="M8.2 2 Q9.8 4.5 8.2 8.8"/><path d="M11.5 4.7 Q13.2 8.5 8.2 12.4"/><path d="M0.6 5.8 Q2 8.5 3.5 10.8 L4.4 13.5"/></g></svg>
<div class="t" style="right:115.69px;top:73.94px;font-size:15.7px;color:#1b2436">0</div>
<div class="t" style="right:35.71px;top:73.94px;font-size:15.7px;color:#1b2436">2</div>
<div class="a" style="left:11.7px;top:92px;width:677px;height:23px;background:#f5f6f9"></div>
<div class="a" style="left:0;top:92px;width:11.7px;height:23px;background:linear-gradient(90deg,#e8ebf0,#d5dae2)"></div>
<div class="t" style="left:13.51px;top:96.94px;font-size:15.7px;color:#1b2436">Podparcie szkienia</div>
<div class="t" style="left:163.56px;top:96.94px;font-size:15.7px;color:#1b2436">szt</div>
<div class="t" style="right:418.21px;top:96.94px;font-size:15.7px;color:#1b2436">2</div>
<svg class="a" style="left:275px;top:95.2px;" width="16" height="16" viewBox="0 0 16 16"><circle cx="8" cy="8" r="7.5" fill="#13a03a"/><path d="M4 8.2 L7 11 L12 5" stroke="#fff" stroke-width="2.2" fill="none"/></svg>
<div class="t" style="left:294.21px;top:96.94px;font-size:15.7px;color:#1b2436">Dostępny</div>
<svg class="a" style="left:413px;top:97px;" width="14" height="14" viewBox="0 0 14 14"><g stroke="#1f2946" stroke-width="1.25" fill="none" stroke-linecap="round" stroke-dasharray="1.6 0.6"><path d="M0.8 2.2 Q2.5 0.3 4.4 1.2 Q6 0.2 8 1 Q10.5 0.3 12.4 1.5"/><path d="M2 3.8 L4.4 6.8"/><path d="M4.4 1.2 L6.2 5.6"/><path d="M8.2 2 Q9.8 4.5 8.2 8.8"/><path d="M11.5 4.7 Q13.2 8.5 8.2 12.4"/><path d="M0.6 5.8 Q2 8.5 3.5 10.8 L4.4 13.5"/></g></svg>
<div class="t" style="right:115.69px;top:96.94px;font-size:15.7px;color:#1b2436">0</div>
<div class="t" style="right:35.71px;top:96.94px;font-size:15.7px;color:#1b2436">2</div>
<div class="a" style="left:11.7px;top:115px;width:677px;height:23px;background:#edf6ed"></div>
<div class="a" style="left:0;top:115px;width:11.7px;height:23px;background:linear-gradient(90deg,#e8ebf0,#d5dae2)"></div>
<div class="t" style="left:14.3px;top:119.94px;font-size:15.7px;color:#1b2436">Zawiasy okienne s<span style="letter-spacing:1.41px">...</span></div>
<div class="t" style="left:163.56px;top:119.94px;font-size:15.7px;color:#1b2436">szt</div>
<div class="t" style="right:418.54px;top:119.94px;font-size:15.7px;color:#1b2436">4</div>
<svg class="a" style="left:275px;top:118.2px;" width="16" height="16" viewBox="0 0 16 16"><circle cx="8" cy="8" r="7.5" fill="#13a03a"/><path d="M4 8.2 L7 11 L12 5" stroke="#fff" stroke-width="2.2" fill="none"/></svg>
<div class="t" style="left:294.21px;top:119.94px;font-size:15.7px;color:#1b2436">Dostępny</div>
<svg class="a" style="left:413px;top:120px;" width="14" height="14" viewBox="0 0 14 14"><g stroke="#1f2946" stroke-width="1.25" fill="none" stroke-linecap="round" stroke-dasharray="1.6 0.6"><path d="M0.8 2.2 Q2.5 0.3 4.4 1.2 Q6 0.2 8 1 Q10.5 0.3 12.4 1.5"/><path d="M2 3.8 L4.4 6.8"/><path d="M4.4 1.2 L6.2 5.6"/><path d="M8.2 2 Q9.8 4.5 8.2 8.8"/><path d="M11.5 4.7 Q13.2 8.5 8.2 12.4"/><path d="M0.6 5.8 Q2 8.5 3.5 10.8 L4.4 13.5"/></g></svg>
<div class="t" style="right:115.69px;top:119.94px;font-size:15.7px;color:#1b2436">0</div>
<div class="t" style="right:36.04px;top:119.94px;font-size:15.7px;color:#1b2436">4</div>
</div>
<div class="a" style="left:915px;top:735px;width:688px;height:40.5px;background:linear-gradient(#e6e9ee,#dfe3e9 50%,#d9dde4)"></div>
<div class="a" style="left:915px;top:735px;width:688px;height:1px;background:#c3cad5"></div>
<div class="a" style="left:929.5px;top:738.6px;width:144.5px;height:31.4px;background:#fff;border:1px solid #c8cfd9;border-radius:2px"><div class="t" style="left:10px;top:8.635px;font-size:15.7px;color:#1b2436;letter-spacing:0.45px">14 pozycji</div></div>
<div class="a" style="left:915px;top:775.5px;width:688px;height:16px;background:#e9ebef"></div>
<svg class="a" style="left:920px;top:779.5px;" width="5" height="8" viewBox="0 0 5 8"><path d="M5 0 L0 4 L5 8Z" fill="#9aa3b0"/></svg>
<svg class="a" style="left:1592px;top:779.5px;" width="5" height="8" viewBox="0 0 5 8"><path d="M0 0 L5 4 L0 8Z" fill="#9aa3b0"/></svg>
<div class="a" style="left:932px;top:776.5px;width:169.5px;height:14px;background:linear-gradient(#f4f5f8,#dcdfe6);border:1px solid #aab2be;border-radius:3px"></div>
<div class="a" style="left:1013.75px;top:780.5px;width:1px;height:6px;background:#5a6272"></div>
<div class="a" style="left:1016.25px;top:780.5px;width:1px;height:6px;background:#5a6272"></div>
<div class="a" style="left:1018.75px;top:780.5px;width:1px;height:6px;background:#5a6272"></div>
<div class="a" style="left:1603px;top:555px;width:15px;height:236px;background:#bcc8da"></div>
<div class="a" style="left:1603px;top:555px;width:15px;height:221px;background:#e9ebef"></div>
<svg class="a" style="left:1606.5px;top:561px;" width="8" height="5" viewBox="0 0 8 5"><path d="M0 5 L4 0 L8 5Z" fill="#9aa3b0"/></svg>
<svg class="a" style="left:1606.5px;top:763px;" width="8" height="5" viewBox="0 0 8 5"><path d="M0 0 L4 5 L8 0Z" fill="#9aa3b0"/></svg>
<div class="a" style="left:1604px;top:573px;width:14px;height:64px;background:linear-gradient(90deg,#f4f5f8,#dcdfe6);border:1px solid #aab2be;border-radius:3px"></div>
<div class="a" style="left:1607.5px;top:601.0px;width:7px;height:1px;background:#5a6272"></div>
<div class="a" style="left:1607.5px;top:603.5px;width:7px;height:1px;background:#5a6272"></div>
<div class="a" style="left:1607.5px;top:606.0px;width:7px;height:1px;background:#5a6272"></div>
<svg class="a" style="left:1627px;top:562px;" width="17" height="14" viewBox="0 0 17 14"><circle cx="2.5" cy="2" r="1.6" fill="none" stroke="#2a7fe0" stroke-width="1.1"/><circle cx="2.5" cy="7" r="1.6" fill="none" stroke="#2a7fe0" stroke-width="1.1"/><circle cx="2.5" cy="12" r="1.6" fill="none" stroke="#2a7fe0" stroke-width="1.1"/><path d="M6 2 H16 M6 7 H16 M6 12 H16" stroke="#2a3446" stroke-width="1.4"/></svg>
<svg class="a" style="left:890.5px;top:561px;" width="16" height="16" viewBox="0 0 16 16"><circle cx="8" cy="8" r="7.5" fill="#2aa040"/><path d="M8 4 V12 M4 8 H12" stroke="#fff" stroke-width="2.2"/></svg>
<svg class="a" style="left:890.5px;top:588px;" width="16" height="16" viewBox="0 0 16 16"><rect x="0.5" y="0.5" width="15" height="15" fill="#fff" stroke="#5a6a9a"/><rect x="2.5" y="2.5" width="3" height="3" fill="#40c0d8"/><rect x="6.5" y="2.5" width="3" height="3" fill="#8ac030"/><rect x="10.5" y="2.5" width="3" height="3" fill="#f0a020"/><rect x="2.5" y="6.5" width="3" height="3" fill="#3a80d0"/><rect x="6.5" y="6.5" width="3" height="3" fill="#8ac030"/><rect x="10.5" y="6.5" width="3" height="3" fill="#e84a40"/><rect x="2.5" y="10.5" width="3" height="3" fill="#3a60c0"/><rect x="6.5" y="10.5" width="3" height="3" fill="#e040a0"/><rect x="10.5" y="10.5" width="3" height="3" fill="#f0c020"/></svg>
<div class="a" style="left:882.4px;top:610.4px;width:33px;height:25px;background:linear-gradient(#c4cede,#aab7cb);border:1px solid #95a2b6;border-radius:3px"></div>
<svg class="a" style="left:891.5px;top:617.5px;" width="15" height="15" viewBox="0 0 15 15"><rect x="0.5" y="0.5" width="6" height="6" fill="#4f86dc"/><rect x="8.5" y="0.5" width="6" height="6" fill="#4f86dc"/><rect x="0.5" y="8.5" width="6" height="6" fill="#4f86dc"/></svg>
<svg class="a" style="left:890.5px;top:704px;" width="16" height="16" viewBox="0 0 16 16"><path d="M8 1 L15 5 L8 9 L1 5Z" fill="#f4a0a0" stroke="#e04848" stroke-width="1"/><path d="M1 8 L8 12 L15 8" stroke="#e04848" stroke-width="1.2" fill="none"/><path d="M1 11 L8 15 L15 11" stroke="#e04848" stroke-width="1.2" fill="none"/></svg>
<svg class="a" style="left:890.5px;top:731px;" width="16" height="16" viewBox="0 0 16 16"><circle cx="8" cy="8" r="7.5" fill="#1a7ff0"/><path d="M8 4 V12 M4 8 H12" stroke="#fff" stroke-width="2"/></svg>
<svg class="a" style="left:889.5px;top:758px;" width="18" height="17" viewBox="0 0 18 17"><rect x="1" y="2.5" width="12" height="10" fill="none" stroke="#5a6478" stroke-width="1"/><rect x="2.8" y="4.2" width="1.8" height="6.8" fill="#8d98aa"/><rect x="9.2" y="4.2" width="1.8" height="6.8" fill="#8d98aa"/><rect x="5.4" y="1" width="2.8" height="12.8" fill="#3aaa48"/><circle cx="12.4" cy="12.4" r="3.7" fill="#2ca443" stroke="#e8f4ea" stroke-width="0.5"/><path d="M12.4 10.2 V14.6 M10.2 12.4 H14.6" stroke="#fff" stroke-width="1.3"/></svg>
<div class="a" style="left:889px;top:785px;width:16px;height:6px;background:#f4f6fa;border:1px solid #a0a8b4;border-bottom:none"></div>
<div class="a" style="left:879.5px;top:312px;width:759px;height:23.3px;border:2px solid #ee1111;border-radius:6px"></div>
<div class="a" style="left:880.3px;top:606.8px;width:37.5px;height:30px;border:2px solid #ee1111;border-radius:6px"></div>
<div class="a" style="left:917px;top:606.5px;width:298.5px;height:22px;border:2px solid #ee1111;border-radius:6px"></div>
<div class="a" style="left:883.5px;top:639px;width:222px;height:71px;background:#f4f4f6;border:1px solid #a8acb4;box-shadow:3px 3px 4px rgba(0,0,0,0.35)"></div>
<div class="t" style="left:916.06px;top:647.83px;font-size:11.5px;color:#111;letter-spacing:0.1px">Pokaż rezerwacje</div>
<div class="t" style="left:916.64px;top:669.83px;font-size:11.5px;color:#111;letter-spacing:0.1px">Zarezerwuj brakującą ilość</div>
<div class="t" style="left:916.64px;top:691.83px;font-size:11.5px;color:#111;letter-spacing:0.1px">Zwolnij rezerwację</div>
<div class="a" style="left:892px;top:665px;width:204px;height:20px;border:2px solid #ee1111;border-radius:6px;box-shadow:0 0 4px rgba(0,0,0,0.3) inset"></div>
<div class="a" style="left:878.5px;top:447px;width:2px;height:2px;background:#8592a8"></div>
<div class="a" style="left:878.5px;top:451px;width:2px;height:2px;background:#8592a8"></div>
<div class="a" style="left:878.5px;top:455px;width:2px;height:2px;background:#8592a8"></div>
<div class="a" style="left:878.5px;top:459px;width:2px;height:2px;background:#8592a8"></div>
<div class="a" style="left:216px;top:796px;width:649px;height:1px;background:#a4afc0"></div>
<div class="a" style="left:882px;top:795.5px;width:771px;height:1px;background:#a4afc0"></div>
<div class="a" style="left:203px;top:818px;width:674px;height:1.5px;background:#9aa6ba"></div>
<div class="a" style="left:881px;top:821px;width:1px;height:0px;"></div></body></html>
